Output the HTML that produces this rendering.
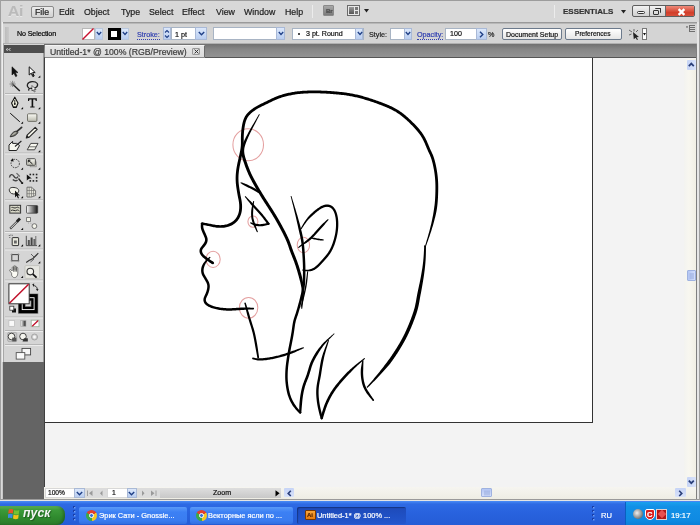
<!DOCTYPE html>
<html><head><meta charset="utf-8">
<style>
*{margin:0;padding:0;box-sizing:border-box}
html,body{width:700px;height:525px;overflow:hidden;background:#d6d6d6;font-family:"Liberation Sans",sans-serif}
.a{position:absolute}
.t{position:absolute;white-space:nowrap;line-height:1;-webkit-text-stroke:0.2px currentColor;will-change:transform}
#menubar{left:0;top:0;width:700px;height:22px;background:#d8d8d8;border-top:1px solid #a8a8a8}
#ctrl{left:3px;top:23px;width:694px;height:21px;background:#d4d4d4;border-top:1px solid #b8b8b8}
#tabbar{left:44px;top:44px;width:653px;height:13.8px;background:linear-gradient(#707070,#868686 40%,#929292);border-bottom:1px solid #555}
#toolhead{left:3px;top:44.5px;width:41px;height:8.3px;background:#4e4e4e}
#tools{left:3px;top:53px;width:41px;height:309px;background:#d5d5d5;border-left:1px solid #e8e8e8;border-right:1px solid #9a9a9a}
#darkleft{left:2.6px;top:362px;width:41.4px;height:137px;background:#646464}
#paste{left:44px;top:58px;width:653px;height:441px;background:#f3f3f3;border-left:1px solid #404040}
#artboard{left:45px;top:58px;width:548px;height:365px;background:#fff;border-right:1px solid #333;border-bottom:1px solid #333}
#taskbar{left:0;top:501px;width:700px;height:24px;background:linear-gradient(#4a8cf6 0,#2e6ae4 3px,#2862de 50%,#255cd6 100%)}
.menu{font-size:8.8px;color:#1c1c1c;top:8.2px}
.cb{font-size:8px;color:#222}
.field{position:absolute;background:#fff;border:1px solid #a8b4c4}
.dd{position:absolute;background:linear-gradient(#dce8fb,#b9cdf0);border-left:1px solid #c0cce0}
.btn{position:absolute;background:linear-gradient(#ffffff,#e6e6e6);border:1px solid #6c7a8c;border-radius:2px}
</style></head><body>
<div class="a" id="menubar"></div>
<div class="a" id="ctrl"></div>
<div class="a" id="tabbar"></div>
<div class="a" id="toolhead"></div>
<div class="a" id="tools"></div>
<div class="a" id="darkleft"></div>
<div class="a" id="paste"></div>
<div class="a" id="artboard"></div>
<div class="a" id="taskbar"></div>

<svg class="a" style="left:0;top:0" width="50" height="370" viewBox="0 0 50 370">
<defs>
<linearGradient id="gw" x1="0" y1="0" x2="0" y2="1"><stop offset="0" stop-color="#fbfbf5"/><stop offset="1" stop-color="#b9b9ad"/></linearGradient>
<linearGradient id="gh" x1="0" y1="0" x2="1" y2="0"><stop offset="0" stop-color="#fff"/><stop offset="1" stop-color="#111"/></linearGradient>
</defs>
<!-- header arrows -->
<path d="M8,48.5L6,49.5L8,50.5M10.5,48.5L8.5,49.5L10.5,50.5" stroke="#d0d0d0" stroke-width="0.9" fill="none"/>
<!-- separators -->
<g stroke="#b6b6b6" stroke-width="1">
<path d="M5,93.5H43M5,153H43M5,199.8H43M5,231.5H43M5,249H43M5,280H43M5,317H43M5,330.5H43M5,344.5H43"/>
</g>
<g stroke="#ececec" stroke-width="1">
<path d="M5,94.5H43M5,154H43M5,200.8H43M5,232.5H43M5,250H43M5,281H43M5,318H43M5,331.5H43M5,345.5H43"/>
</g>
<!-- markers -->
<g fill="#111">
<path d="M38,77.8L40.3,75.5V77.8Z"/>
<path d="M20.8,109.2L23.1,106.9V109.2Z M38,109.2L40.3,106.9V109.2Z"/>
<path d="M20.8,123.8L23.1,121.5V123.8Z M38,123.8L40.3,121.5V123.8Z"/>
<path d="M38,138.2L40.3,135.9V138.2Z M38,152.3L40.3,150V152.3Z"/>
<path d="M20.8,169.8L23.1,167.5V169.8Z M38,169.8L40.3,167.5V169.8Z"/>
<path d="M20.8,184L23.1,181.7V184Z"/>
<path d="M20.8,198.3L23.1,196V198.3Z M38,198.3L40.3,196V198.3Z"/>
<path d="M20.8,230L23.1,227.7V230Z"/>
<path d="M20.8,246.5L23.1,244.2V246.5Z M38,246.5L40.3,244.2V246.5Z"/>
<path d="M38,263.5L40.3,261.2V263.5Z M20.8,278L23.1,275.7V278Z"/>
</g>
<!-- selection -->
<path d="M12,66.8V75L14,73.2L15.6,76.6L17,76L15.4,72.6H18Z" fill="#111" stroke="#111" stroke-width="0.6" stroke-linejoin="round"/>
<path d="M29.2,66.8V75L31.2,73.2L32.8,76.6L34.2,76L32.6,72.6H35.2Z" fill="#fff" stroke="#111" stroke-width="1" stroke-linejoin="round"/>
<path d="M31,72.2L33,76.4L34.2,76Z" fill="#111"/>
<!-- magic wand -->
<path d="M13,84.5L19.8,91" stroke="#222" stroke-width="1.5"/>
<path d="M12.6,80.8V87M9.5,84H15.7M10.4,81.8L14.8,86.2M14.8,81.8L10.4,86.2" stroke="#666" stroke-width="0.7"/>
<!-- lasso -->
<path d="M29,88C26,86 27,82 32,81.6C37,81.3 39,84.5 36.5,87C35,88.3 33,88.6 31,88.3C29.5,88 28,89 29,90.6" stroke="#222" stroke-width="1.2" fill="none"/>
<path d="M32,85.5V91L33.2,89.8L34.3,92L35.2,91.5L34.2,89.5H36Z" fill="#fff" stroke="#222" stroke-width="0.6"/>
<!-- pen -->
<path d="M14.8,97.2L18,103L16.4,107H13.2L11.6,103Z" fill="#f2f2e0" stroke="#111" stroke-width="1.1" stroke-linejoin="round"/>
<path d="M14.8,100V104" stroke="#111" stroke-width="0.9"/><circle cx="14.8" cy="104" r="0.9" fill="#111"/>
<path d="M13,106.8H16.6V108H13Z" fill="#111"/>
<!-- type -->
<path d="M28,98.3H36.8V101H35.8L35.3,99.6H33.2V106.5H34.6V107.6H30.2V106.5H31.6V99.6H29.5L29,101H28Z" fill="#111"/>
<!-- line -->
<path d="M10.2,113.2L19.8,121.8" stroke="#111" stroke-width="1"/>
<!-- rectangle -->
<rect x="27.5" y="113.8" width="9.4" height="7.6" rx="1" fill="url(#gw)" stroke="#5a5a52" stroke-width="0.8"/>
<!-- paintbrush -->
<path d="M21.6,127.4L16.2,132.2" stroke="#333" stroke-width="1.8" stroke-linecap="round"/>
<path d="M16.6,131.2C14.2,131 11.6,133 10.2,136.8C13.8,136.6 16.6,135 17.8,132.6Z" fill="#7a7a72" stroke="#222" stroke-width="0.9"/>
<path d="M12.2,135.2C13.4,133.8 14.6,133 15.8,132.8" stroke="#e8e8e0" stroke-width="0.7" fill="none"/>
<!-- pencil -->
<path d="M35.2,127.3L37.2,129.3L29.2,137.2L26.3,138L27.1,135.1Z" fill="#f4f4ea" stroke="#222" stroke-width="1.1" stroke-linejoin="round"/><path d="M26.3,138L27.1,135.1L29.2,137.2Z" fill="#222"/>
<!-- blob brush -->
<path d="M9,145L12.6,141.3V143.4H16.6L19.5,145.5L16.6,150.5H9Z" fill="#f8f8f0" stroke="#222" stroke-width="1" stroke-linejoin="round"/>
<path d="M21.4,141L15,146.5" stroke="#222" stroke-width="1.1"/>
<!-- eraser -->
<path d="M30.8,143.4H38L34.6,149.8H27.2Z" fill="#f6f6ee" stroke="#333" stroke-width="0.9" stroke-linejoin="round"/>
<path d="M28.8,146.8H36" stroke="#333" stroke-width="0.7"/>
<!-- rotate -->
<circle cx="15.2" cy="163.5" r="4.2" fill="none" stroke="#333" stroke-width="1" stroke-dasharray="1.4,1.1"/>
<path d="M10.5,160.5L13,158.3L13.5,161.8Z" fill="#111"/>
<!-- scale -->
<rect x="30.2" y="161.8" width="6" height="5" fill="#cfcfc8" stroke="#888" stroke-width="0.7"/>
<rect x="26.6" y="158.7" width="8.8" height="6.6" rx="0.8" fill="url(#gw)" stroke="#444" stroke-width="0.9"/>
<path d="M28.3,160.2L32.5,164M28.3,160.2V162.3M28.3,160.2H30.4" stroke="#111" stroke-width="1"/>
<!-- warp -->
<path d="M9.5,177.5C10,174 12.5,173.8 13.8,176.2C15,178.5 17,178.8 18,176.5M12.8,179.5C14.5,181.2 16.5,181.2 17.5,179.8" stroke="#444" stroke-width="1.4" fill="none"/>
<path d="M18.5,178.5L22.5,183.5" stroke="#222" stroke-width="1.3"/>
<path d="M16.5,173.2L19.8,176.5" stroke="#666" stroke-width="1.2"/>
<!-- free transform -->
<g fill="#222"><rect x="29.5" y="173.7" width="1.6" height="1.6"/><rect x="32.6" y="173.7" width="1.6" height="1.6"/><rect x="35.8" y="173.7" width="1.6" height="1.6"/><rect x="35.8" y="176.9" width="1.6" height="1.6"/><rect x="29.5" y="180.1" width="1.6" height="1.6"/><rect x="32.6" y="180.1" width="1.6" height="1.6"/><rect x="35.8" y="180.1" width="1.6" height="1.6"/></g>
<path d="M26.8,174.4V180.6L28.3,179.2L30,178.6L31.8,178.4Z" fill="#111"/>
<!-- shape builder -->
<path d="M9.5,191C8.5,188.5 11,187 14,187.5C17.5,187.8 19.5,189.5 18.5,192C17.5,194 14,194.5 11.5,193.5C10.5,193 9.8,192 9.5,191Z" fill="#f3f3ea" stroke="#333" stroke-width="1"/>
<path d="M15,190.5V197.5L16.6,195.8L18,198.5L19,198L17.8,195.4H20Z" fill="#111"/>
<!-- perspective grid -->
<path d="M27,187.2H31.5L35.6,190.8V195.5L31.5,197H27Z" fill="#e6e6dc" stroke="#555" stroke-width="0.8"/>
<path d="M29.2,187.2V197M31.5,187.2V197M33.5,189V196M27,190.5H35.4M27,193.7H35.4" stroke="#666" stroke-width="0.6"/>
<!-- mesh -->
<rect x="9.8" y="205.3" width="10.8" height="7.8" fill="#d8d8c8" stroke="#333" stroke-width="1"/>
<path d="M11.5,207.5C13,206.8 14.5,209 16.5,207.5C18,206.5 19,208.5 19.5,208M11,210.5C13,209 15,212 17,210C18,209.5 19,211 19.5,211" stroke="#333" stroke-width="1" fill="none"/>
<!-- gradient -->
<rect x="26.5" y="205.6" width="11.2" height="7.6" rx="0.8" fill="url(#gh)" stroke="#444" stroke-width="0.8"/>
<!-- eyedropper -->
<path d="M10.2,228.6L17.6,221.2" stroke="#444" stroke-width="2.2"/>
<path d="M10.8,228L16.6,222.2" stroke="#eee" stroke-width="0.9"/>
<path d="M16,220.5L19,217.6L21,219.6L18,222.5Z" fill="#222"/>
<!-- blend -->
<rect x="26.6" y="217.6" width="3.8" height="3.8" fill="#f4f4ea" stroke="#666" stroke-width="0.8"/>
<path d="M28.5,222V224M30,223L32.5,224.5" stroke="#bbb" stroke-width="0.9"/>
<circle cx="34.4" cy="226.1" r="2.4" fill="#f4f4ea" stroke="#666" stroke-width="0.9"/>
<!-- symbol sprayer -->
<rect x="12.2" y="237.6" width="6.4" height="8" rx="0.5" fill="#e8e8dc" stroke="#333" stroke-width="1"/>
<path d="M14,240.5H16.8V243.5H14Z" fill="#666"/>
<path d="M9.3,235V236M10.8,234.6V235.6M12.3,234.8V235.8M9.8,237V238" stroke="#444" stroke-width="0.8"/>
<!-- column graph -->
<path d="M26.3,235.8V245.6H37" stroke="#444" stroke-width="0.9" fill="none"/>
<rect x="27.8" y="240" width="2" height="5.2" fill="#555"/>
<rect x="30.6" y="237.5" width="2" height="7.7" fill="#444"/>
<rect x="33.4" y="239" width="2" height="6.2" fill="#666"/>
<path d="M35.8,236V245.2" stroke="#555" stroke-width="0.8"/>
<!-- artboard -->
<rect x="11.8" y="254.6" width="6.6" height="6.2" fill="none" stroke="#444" stroke-width="1"/>
<path d="M11.8,253.2V254.6M18.4,253.2V254.6M11.8,260.8V262.2M18.4,260.8V262.2M10.4,254.6H11.8M10.4,260.8H11.8M18.4,254.6H19.8M18.4,260.8H19.8" stroke="#999" stroke-width="0.7"/>
<!-- slice -->
<path d="M26.2,262.5L29,260.5L33,258.5L36,255.5L38.3,253.2" stroke="#333" stroke-width="1.1" fill="none"/>
<path d="M30.5,262L34,259M31,254L34.5,257.5" stroke="#555" stroke-width="0.9"/>
<!-- hand -->
<path d="M11.6,273.2L9.8,270.8C9.2,270 10.2,269 11,269.8L12.2,271V267.6C12.2,266.7 13.6,266.7 13.6,267.6V270.6V266.4C13.6,265.5 15,265.5 15,266.4V270.6V266.8C15,265.9 16.4,265.9 16.4,266.8V270.8V268C16.4,267.2 17.8,267.2 17.8,268V273.2C17.8,275.8 16.4,277.6 14.4,277.6C13,277.6 12.3,276.6 11.6,275.2Z" fill="#fbfbf4" stroke="#444" stroke-width="0.65" stroke-linejoin="round"/>
<path d="M13.6,270.6V272M15,270.6V272M16.4,270.8V272" stroke="#555" stroke-width="0.6"/>
<!-- zoom selected -->
<rect x="25" y="265.6" width="14.6" height="12.8" rx="1" fill="#e6e6e0" stroke="#bdbdb6" stroke-width="0.8"/>
<circle cx="30.3" cy="271.6" r="3.3" fill="#f4f4ee" stroke="#333" stroke-width="1.1"/>
<path d="M32.8,274.1L36.6,277.6" stroke="#111" stroke-width="1.8"/>
<!-- fill/stroke -->
<rect x="18" y="293.5" width="20.3" height="20.3" fill="#888"/>
<rect x="18.6" y="294.1" width="19.1" height="19.1" fill="#000"/>
<rect x="22.2" y="297.7" width="11.9" height="11.9" fill="none" stroke="#fff" stroke-width="0.9"/>
<rect x="24.3" y="299.8" width="7.7" height="7.7" fill="#666" stroke="#000" stroke-width="1.2"/>
<rect x="25.6" y="301.1" width="5.1" height="5.1" fill="#d8d8d8"/>
<rect x="8.9" y="283.8" width="20.3" height="20" fill="#fff" stroke="#333" stroke-width="1"/>
<path d="M9.4,303.3L28.6,284.3" stroke="#c0102a" stroke-width="1.5"/>
<!-- swap -->
<path d="M33,285.5C35.5,285.5 37.3,287 37.3,289.5" stroke="#333" stroke-width="1" fill="none"/>
<path d="M32.2,284.3L34.2,283.6L33.8,287Z M36,289L38.6,289L37.3,291.2Z" fill="#222"/>
<!-- default -->
<rect x="12" y="308.5" width="4" height="4" fill="#111"/>
<rect x="9.8" y="306.2" width="4" height="4" fill="#fff" stroke="#333" stroke-width="0.8"/>
<!-- color modes -->
<rect x="8.9" y="320.5" width="5.6" height="5.8" fill="#fafafa" stroke="#bbb" stroke-width="0.7"/>
<rect x="20.7" y="320.5" width="5.2" height="5.8" fill="url(#gh)" stroke="#aaa" stroke-width="0.7"/>
<rect x="31.2" y="320.2" width="7.8" height="6.5" fill="#fff" stroke="#9ab09a" stroke-width="0.8"/>
<path d="M32.2,326.2L38.2,320.6" stroke="#c0102a" stroke-width="1.3"/>
<!-- draw modes -->
<rect x="7.6" y="332.4" width="9.2" height="9.2" rx="1.5" fill="#c8c8c8" stroke="#999" stroke-width="0.6"/>
<circle cx="11.5" cy="336.5" r="3.3" fill="#f4f4ee" stroke="#333" stroke-width="0.9"/>
<rect x="12.2" y="337.6" width="4.2" height="3.8" fill="#555"/>
<circle cx="23" cy="336.5" r="3.3" fill="#f4f4ee" stroke="#333" stroke-width="0.9"/>
<path d="M24,338.2H27.8V341.6H22.5Z" fill="#333"/>
<circle cx="34.5" cy="337" r="3" fill="#d0d0d0" stroke="#999" stroke-width="0.8"/>
<circle cx="34.5" cy="337" r="1.4" fill="#f8f8f8"/>
<!-- screen mode -->
<rect x="22" y="348.4" width="8.6" height="6.5" fill="#f6f6f6" stroke="#444" stroke-width="0.9"/>
<rect x="16.2" y="352.6" width="8.6" height="6.5" fill="#fafafa" stroke="#555" stroke-width="0.9"/>
</svg>


<!-- window frame -->
<div class="a" style="left:0;top:22px;width:1px;height:479px;background:#a0a0a0"></div>
<div class="a" style="left:1px;top:22px;width:1px;height:479px;background:#dadada"></div>
<div class="a" style="left:2px;top:22px;width:1px;height:479px;background:#eeeeee"></div>
<div class="a" style="left:3px;top:44px;width:1px;height:318px;background:#a8a8a8"></div><div class="a" style="left:2px;top:362px;width:1px;height:137px;background:#c8c8c8"></div>
<div class="a" style="left:696px;top:44px;width:1px;height:455px;background:#808080"></div>
<div class="a" style="left:697px;top:22px;width:2px;height:479px;background:#e6e6e6"></div>
<div class="a" style="left:699px;top:22px;width:1px;height:479px;background:#a8a8a8"></div>
<div class="a" style="left:0;top:498.5px;width:700px;height:2.5px;background:#e4e4e4;border-top:1px solid #9a9a9a"></div>
<!-- vertical scrollbar -->
<div class="a" style="left:684px;top:59px;width:12px;height:428px;background:linear-gradient(90deg,#f3f3f0,#f8f7f0 40%,#f1efe4)"></div>
<div class="a" style="left:687px;top:59.5px;width:8.5px;height:10.5px;background:linear-gradient(90deg,#c6d4f6,#d8e2fa);border-radius:1px"></div>
<svg class="a" style="left:687px;top:60px" width="9" height="10"><path d="M1.8,6.2L4.3,3.6L6.8,6.2" stroke="#2a3f7a" stroke-width="1.7" fill="none"/></svg>
<div class="a" style="left:686.8px;top:270px;width:9px;height:10.5px;background:linear-gradient(90deg,#b4c6f4,#d2ddfa);border:1px solid #9fb2e0;border-radius:1px"></div>
<svg class="a" style="left:688.5px;top:272.5px" width="6" height="6"><path d="M0.5,1H5M0.5,3H5M0.5,5H5" stroke="#8ea2d6" stroke-width="0.8"/></svg>
<div class="a" style="left:687px;top:476.5px;width:8.5px;height:10.5px;background:linear-gradient(90deg,#c6d4f6,#d8e2fa);border-radius:1px"></div>
<svg class="a" style="left:687px;top:477px" width="9" height="10"><path d="M1.8,3.6L4.3,6.2L6.8,3.6" stroke="#2a3f7a" stroke-width="1.7" fill="none"/></svg>
<!-- status bar -->
<div class="a" style="left:44px;top:486.5px;width:652px;height:12px;background:linear-gradient(#f6f5f0,#eeede4)"></div>
<div class="a" style="left:45px;top:487.5px;width:40px;height:10.5px;background:#fff;border:1px solid #d8d8d8"></div>
<div class="t" style="left:48.2px;top:489.6px;font-size:6.6px;color:#111">100%</div>
<div class="dd" style="left:74px;top:487.8px;width:11px;height:10px;border:1px solid #a9b9d6"></div>
<svg class="a" style="left:76px;top:490.5px" width="7" height="5"><path d="M0.8,1L3.5,3.8L6.2,1" stroke="#1f3f86" stroke-width="1.4" fill="none"/></svg>
<div class="a" style="left:85px;top:487.5px;width:75px;height:10.5px;background:#dcdcdc"></div>
<svg class="a" style="left:85px;top:487.5px" width="75" height="11"><path d="M2.5,2.5V8" stroke="#9a9a9a" stroke-width="0.9"/><path d="M7.5,2.5L4,5.2L7.5,8Z M17.5,2.5L15,5.2L17.5,8Z M57,2.5L59.5,5.2L57,8Z M66,2.5L69.5,5.2L66,8Z" fill="#9a9a9a"/><path d="M71,2.5V8" stroke="#9a9a9a" stroke-width="0.9"/></svg>
<div class="a" style="left:107px;top:487.5px;width:30px;height:10.5px;background:#fff;border:1px solid #d8d8d8"></div>
<div class="t" style="left:111.5px;top:490px;font-size:6.8px;color:#111">1</div>
<div class="dd" style="left:126.5px;top:487.8px;width:10.5px;height:10px;border:1px solid #a9b9d6"></div>
<svg class="a" style="left:128.3px;top:490.5px" width="7" height="5"><path d="M0.8,1L3.5,3.8L6.2,1" stroke="#1f3f86" stroke-width="1.4" fill="none"/></svg>
<div class="a" style="left:159.6px;top:488.2px;width:121px;height:10px;background:linear-gradient(#dedede,#c8c8c8)"></div>
<div class="t" style="left:213.2px;top:490.2px;font-size:7.1px;color:#111">Zoom</div>
<svg class="a" style="left:275px;top:490px" width="5" height="7"><path d="M0.5,0.3L4.6,3.3L0.5,6.4Z" fill="#000"/></svg>
<div class="a" style="left:284px;top:488.2px;width:9.6px;height:9.2px;background:linear-gradient(#c6d4f6,#d8e2fa);border-radius:1px"></div>
<svg class="a" style="left:284.5px;top:488.5px" width="9" height="9"><path d="M5.8,1.8L3.2,4.4L5.8,7" stroke="#2a3f7a" stroke-width="1.6" fill="none"/></svg>
<div class="a" style="left:480.7px;top:488.4px;width:11px;height:8.8px;background:linear-gradient(#b4c6f4,#d2ddfa);border:1px solid #9fb2e0;border-radius:1px"></div>
<svg class="a" style="left:483.5px;top:490px" width="6" height="6"><path d="M1,0.5V5.5M3,0.5V5.5M5,0.5V5.5" stroke="#8ea2d6" stroke-width="0.8"/></svg>
<div class="a" style="left:675px;top:488.2px;width:10.5px;height:9.2px;background:linear-gradient(#c6d4f6,#d8e2fa);border-radius:1px"></div>
<svg class="a" style="left:676px;top:488.5px" width="9" height="9"><path d="M3.2,1.8L5.8,4.4L3.2,7" stroke="#2a3f7a" stroke-width="1.6" fill="none"/></svg>
<!-- taskbar -->
<div class="a" style="left:0;top:505.5px;width:65px;height:19.5px;border-radius:0 8px 8px 0;background:linear-gradient(#5fb85a 0%,#3c9a3a 20%,#2f8a2e 60%,#2b7c2a 100%);box-shadow:inset -2px 0 3px rgba(0,0,0,0.25)"></div>
<svg class="a" style="left:8px;top:508px" width="12" height="12"><path d="M0.8,1.6C2.5,0.6 4,0.8 5.4,1.6L4.8,5.6C3.4,4.8 2,4.8 0.2,5.6Z" fill="#e8542a"/><path d="M6.2,1.9C7.8,2.8 9.4,2.8 11.3,1.9L10.8,5.9C9,6.7 7.4,6.6 5.6,5.9Z" fill="#74c234"/><path d="M0.1,6.3C2,5.5 3.4,5.5 4.7,6.3L4.2,10.3C2.8,9.5 1.4,9.5-0.4,10.3Z" fill="#3c8ae4"/><path d="M5.5,6.6C7.3,7.4 8.9,7.4 10.7,6.6L10.2,10.6C8.4,11.4 6.8,11.3 5,10.6Z" fill="#f2c21a"/></svg>
<div class="t" style="left:23px;top:507px;font-size:12.2px;font-weight:bold;font-style:italic;color:#f4f4f4;letter-spacing:0.1px;text-shadow:1px 1px 1px rgba(0,0,0,0.35);-webkit-text-stroke:0">пуск</div>
<svg class="a" style="left:72px;top:505px" width="6" height="17"><g fill="#1a3fa8"><rect x="1" y="1" width="2" height="2"/><rect x="1" y="5" width="2" height="2"/><rect x="1" y="9" width="2" height="2"/><rect x="1" y="13" width="2" height="2"/></g><g fill="#6e9ef6"><rect x="2" y="2" width="1.5" height="1.5"/><rect x="2" y="6" width="1.5" height="1.5"/><rect x="2" y="10" width="1.5" height="1.5"/><rect x="2" y="14" width="1.5" height="1.5"/></g></svg>
<div class="a" style="left:79px;top:507px;width:108px;height:17px;border-radius:2px;background:linear-gradient(#5a9af8,#3c80f4 30%,#3a7cf0 80%,#3370e0)"></div>
<div class="a" style="left:85.5px;top:509.5px;width:11px;height:11px;border-radius:50%;background:conic-gradient(from -60deg,#e0402e 0 120deg,#f5c823 120deg 240deg,#3aa84a 240deg 360deg)"></div>
<div class="a" style="left:88.5px;top:512.5px;width:5px;height:5px;border-radius:50%;background:#3a72d8;border:1px solid #fff"></div>
<div class="t" style="left:99px;top:512px;font-size:7.4px;color:#fff">Эрик Сати - Gnossie...</div>
<div class="a" style="left:190px;top:507px;width:103px;height:17px;border-radius:2px;background:linear-gradient(#5a9af8,#3c80f4 30%,#3a7cf0 80%,#3370e0)"></div>
<div class="a" style="left:195.5px;top:509.5px;width:11px;height:11px;border-radius:50%;background:conic-gradient(from -60deg,#e0402e 0 120deg,#f5c823 120deg 240deg,#3aa84a 240deg 360deg)"></div>
<div class="a" style="left:198.5px;top:512.5px;width:5px;height:5px;border-radius:50%;background:#3a72d8;border:1px solid #fff"></div>
<div class="t" style="left:208px;top:512px;font-size:7.4px;color:#fff">Векторные ясли по ...</div>
<div class="a" style="left:297px;top:507px;width:109px;height:17px;border-radius:2px;background:linear-gradient(#1e4ab8,#1f50c4 50%,#2456cc);box-shadow:inset 1px 1px 1px rgba(0,0,0,0.3)"></div>
<div class="a" style="left:305px;top:509.5px;width:10.5px;height:10.5px;background:linear-gradient(#f7a53a,#e77a0e);border:1px solid #7a3a00;border-radius:1px"></div>
<div class="t" style="left:306.5px;top:512px;font-size:6px;color:#5a2800;font-weight:bold">Ai</div>
<div class="t" style="left:317px;top:512px;font-size:7.4px;color:#fff">Untitled-1* @ 100% ...</div>
<svg class="a" style="left:591px;top:505px" width="6" height="17"><g fill="#1a3fa8"><rect x="1" y="1" width="2" height="2"/><rect x="1" y="5" width="2" height="2"/><rect x="1" y="9" width="2" height="2"/><rect x="1" y="13" width="2" height="2"/></g><g fill="#6e9ef6"><rect x="2" y="2" width="1.5" height="1.5"/><rect x="2" y="6" width="1.5" height="1.5"/><rect x="2" y="10" width="1.5" height="1.5"/><rect x="2" y="14" width="1.5" height="1.5"/></g></svg>
<div class="t" style="left:600.6px;top:511.5px;font-size:7.6px;color:#fff">RU</div>
<div class="a" style="left:624.5px;top:502px;width:75.5px;height:23px;background:linear-gradient(#1aa0ee,#1290e6 20%,#0f8ae2 80%,#0c7fd8);border-left:1px solid #0a5fc0"></div>
<div class="a" style="left:633px;top:509px;width:10px;height:10px;border-radius:50%;background:radial-gradient(circle at 40% 40%,#f0f0f0,#888 60%,#444)"></div>
<div class="a" style="left:644.5px;top:509px;width:10px;height:11px;background:#d81e1e;border-radius:2px 2px 5px 5px;border:1px solid #fff"></div>
<div class="t" style="left:646.5px;top:510.5px;font-size:7.5px;font-weight:bold;color:#fff">C</div>
<div class="a" style="left:656px;top:508.5px;width:11px;height:11px;background:#b01818;border:1px solid #e0d0d0"></div>
<div class="a" style="left:658.5px;top:511px;width:6px;height:6px;background:#e85050;transform:rotate(45deg)"></div>
<div class="t" style="left:671px;top:511.6px;font-size:7.8px;color:#fff">19:17</div>

<!-- menubar content -->
<div class="a" style="left:0;top:0;width:700px;height:1px;background:#9c9c9c"></div>
<div class="a" style="left:0;top:0;width:1px;height:500px;background:#a0a0a0"></div>
<div class="a" style="left:699px;top:0;width:1px;height:500px;background:#a0a0a0"></div>
<div class="t" style="left:8.3px;top:2.6px;font-size:15.5px;font-weight:bold;color:#bababa;letter-spacing:-0.3px;text-shadow:0 1px 0 #e8e8e8">Ai</div>
<div class="a" style="left:31px;top:6px;width:23px;height:12px;border:1px solid #8a8a8a;border-radius:2px;background:linear-gradient(#ececec,#d2d2d2)"></div>
<div class="t menu" style="left:34.5px">File</div>
<div class="t menu" style="left:58.5px">Edit</div>
<div class="t menu" style="left:84px">Object</div>
<div class="t menu" style="left:120.5px">Type</div>
<div class="t menu" style="left:149px">Select</div>
<div class="t menu" style="left:182.3px">Effect</div>
<div class="t menu" style="left:215.5px">View</div>
<div class="t menu" style="left:244.2px">Window</div>
<div class="t menu" style="left:285px">Help</div>
<div class="a" style="left:312px;top:5px;width:1px;height:13px;background:#b0b0b0;border-right:1px solid #ececec"></div>
<div class="a" style="left:323px;top:5px;width:11px;height:10.5px;background:linear-gradient(#a8a8a8,#7a7a7a);border:1px solid #8a8a8a;border-radius:1px"></div>
<div class="t" style="left:325.8px;top:7.6px;font-size:6px;color:#4a4a4a;font-weight:bold">Br</div>
<div class="a" style="left:347px;top:5px;width:13px;height:11px;background:#e8e8e8;border:1px solid #6a6a6a"></div>
<div class="a" style="left:349px;top:7px;width:5px;height:7px;background:linear-gradient(#9a9a9a,#555)"></div>
<div class="a" style="left:355px;top:7px;width:3px;height:3px;background:#777"></div>
<div class="a" style="left:355px;top:11px;width:3px;height:3px;background:#777"></div>
<svg class="a" style="left:364px;top:9px" width="5" height="4"><path d="M0,0H5L2.5,3.5Z" fill="#222"/></svg>
<div class="a" style="left:554px;top:5px;width:1px;height:13px;background:#b0b0b0;border-right:1px solid #ececec"></div>
<div class="t" style="left:562.8px;top:7.6px;font-size:8px;font-weight:bold;color:#333">ESSENTIALS</div>
<svg class="a" style="left:620.5px;top:10px" width="5" height="4"><path d="M0,0H5L2.5,3.5Z" fill="#222"/></svg>
<div class="a" style="left:632px;top:5.4px;width:62.5px;height:12px;border:1px solid #5e5e5e;border-radius:2px;overflow:hidden;background:linear-gradient(#f2f2f2,#d0d0d0)">
  <div class="a" style="left:15.6px;top:0;width:1px;height:12px;background:#6a6a6a"></div>
  <div class="a" style="left:32.2px;top:0;width:1px;height:12px;background:#6a6a6a"></div>
  <div class="a" style="left:33.2px;top:0;width:30px;height:12px;background:linear-gradient(#ee8a7a,#d23e2a 55%,#dc5a44)"></div>
  <div class="a" style="left:3.6px;top:4.4px;width:8.4px;height:3.4px;border:1px solid #333;background:#fafafa;border-radius:1.5px"></div>
  <div class="a" style="left:19.8px;top:4px;width:6px;height:5px;border:1px solid #333;border-radius:1px"></div>
  <div class="a" style="left:22px;top:2px;width:6px;height:5px;border:1px solid #333;border-left:none;border-bottom:none;border-radius:1px"></div>
  <svg class="a" style="left:43.6px;top:1.8px" width="9" height="8"><path d="M1.6,1.2L7.4,6.8M7.4,1.2L1.6,6.8" stroke="#fff" stroke-width="2.3"/></svg>
</div>
<!-- control bar content -->
<div class="a" style="left:3px;top:22px;width:694px;height:1px;background:#9a9a9a"></div>
<div class="a" style="left:3px;top:43px;width:694px;height:1px;background:#b0b0b0"></div>
<div class="a" style="left:5px;top:27px;width:4px;height:16px;background:linear-gradient(90deg,#bdbdbd,#c9c9c9)"></div>
<div class="t cb" style="left:16.6px;top:30.9px;font-size:7.1px;letter-spacing:-0.1px;color:#000">No Selection</div>
<div class="a" style="left:81.5px;top:27.5px;width:13px;height:12.5px;background:#fff;border:1px solid #b8b8b8"></div>
<svg class="a" style="left:82px;top:28px" width="12" height="12"><path d="M0.5,11.5L11.5,0.5" stroke="#c8102e" stroke-width="1.4"/></svg>
<div class="dd" style="left:95px;top:27.5px;width:8px;height:12.5px;border:1px solid #b9c7dc"></div>
<svg class="a" style="left:96px;top:31px" width="6" height="5"><path d="M0.8,1L3,3.5L5.2,1" stroke="#1f3f86" stroke-width="1.3" fill="none"/></svg>
<div class="a" style="left:108px;top:27.5px;width:12.5px;height:12.5px;background:#000"></div>
<div class="a" style="left:111.2px;top:30.7px;width:6px;height:6px;background:#fff"></div>
<div class="dd" style="left:121px;top:27.5px;width:8px;height:12.5px;border:1px solid #b9c7dc"></div>
<svg class="a" style="left:122px;top:31px" width="6" height="5"><path d="M0.8,1L3,3.5L5.2,1" stroke="#1f3f86" stroke-width="1.3" fill="none"/></svg>
<div class="t cb" style="left:136.6px;top:31px;font-size:7.2px;color:#3240b0;border-bottom:1px dotted #3240b0;padding-bottom:0.5px">Stroke:</div>
<div class="a" style="left:162.8px;top:27.3px;width:8.5px;height:12.7px;background:linear-gradient(#dce8fb,#b9cdf0);border:1px solid #a9b9d6"></div>
<svg class="a" style="left:164px;top:28.5px" width="6" height="10"><path d="M1,3.5L3,1.5L5,3.5M1,6.5L3,8.5L5,6.5" stroke="#1f3f86" stroke-width="1.1" fill="none"/></svg>
<div class="field" style="left:171.3px;top:27.3px;width:35.2px;height:12.7px"></div>
<div class="t cb" style="left:175px;top:31px;font-size:7.2px;color:#111">1 pt</div>
<div class="dd" style="left:195px;top:27.3px;width:11.5px;height:12.7px;border:1px solid #a9b9d6"></div>
<svg class="a" style="left:197.5px;top:31px" width="7" height="5"><path d="M0.8,1L3.5,3.8L6.2,1" stroke="#1f3f86" stroke-width="1.4" fill="none"/></svg>
<div class="field" style="left:212.6px;top:27.3px;width:72.4px;height:12.7px"></div>
<div class="dd" style="left:276.4px;top:27.3px;width:8.6px;height:12.7px;border:1px solid #a9b9d6"></div>
<svg class="a" style="left:277.8px;top:31px" width="6" height="5"><path d="M0.8,1L3,3.5L5.2,1" stroke="#1f3f86" stroke-width="1.3" fill="none"/></svg>
<div class="field" style="left:291.5px;top:27.5px;width:72px;height:12.9px"></div>
<div class="a" style="left:297.5px;top:33px;width:2px;height:2px;background:#111;border-radius:1px"></div>
<div class="t cb" style="left:306.3px;top:31px;font-size:7.1px;color:#111">3 pt. Round</div>
<div class="dd" style="left:355.4px;top:27.5px;width:8.1px;height:12.9px;border:1px solid #a9b9d6"></div>
<svg class="a" style="left:356.5px;top:31.2px" width="6" height="5"><path d="M0.8,1L3,3.5L5.2,1" stroke="#1f3f86" stroke-width="1.3" fill="none"/></svg>
<div class="t cb" style="left:369.4px;top:31px;font-size:7.2px;color:#222">Style:</div>
<div class="field" style="left:389.6px;top:27.5px;width:22.8px;height:12.9px"></div>
<div class="dd" style="left:404px;top:27.5px;width:8.4px;height:12.9px;border:1px solid #a9b9d6"></div>
<svg class="a" style="left:405.2px;top:31.2px" width="6" height="5"><path d="M0.8,1L3,3.5L5.2,1" stroke="#1f3f86" stroke-width="1.3" fill="none"/></svg>
<div class="t cb" style="left:416.5px;top:31px;font-size:7.2px;color:#3240b0;border-bottom:1px dotted #3240b0;padding-bottom:0.5px">Opacity:</div>
<div class="field" style="left:445.4px;top:27.5px;width:41.1px;height:12.9px"></div>
<div class="t cb" style="left:450.4px;top:31px;font-size:7.1px;color:#111">100</div>
<div class="dd" style="left:476px;top:27.5px;width:10.5px;height:12.9px;border:1px solid #a9b9d6"></div>
<svg class="a" style="left:479px;top:30.5px" width="5" height="7"><path d="M1,0.8L3.8,3.5L1,6.2" stroke="#1f3f86" stroke-width="1.4" fill="none"/></svg>
<div class="t cb" style="left:488px;top:31px;font-size:7.2px;color:#222">%</div>
<div class="btn" style="left:502px;top:28px;width:60px;height:12.4px"></div>
<div class="t cb" style="left:505.6px;top:31.2px;font-size:7px;color:#111">Document Setup</div>
<div class="btn" style="left:565px;top:28px;width:57px;height:12.4px"></div>
<div class="t cb" style="left:575px;top:31.2px;font-size:6.6px;color:#111">Preferences</div>
<svg class="a" style="left:628px;top:28px" width="13" height="12"><path d="M1,2L4,4M6,1L6,3.5M10,2L8,4M1,7L3.5,6" stroke="#666" stroke-width="1"/><path d="M5,4L11,9L8.5,9.3L10,11.5L9,12L7.6,9.8L5.8,11.2Z" fill="#222"/></svg>
<div class="a" style="left:641.5px;top:28px;width:5px;height:12.4px;background:#fff;border:1px solid #777"></div>
<svg class="a" style="left:642.5px;top:32.5px" width="3" height="3"><path d="M0,0H3L1.5,2.5Z" fill="#111"/></svg>
<svg class="a" style="left:686px;top:24.5px" width="10" height="7"><path d="M0,1.5L2,1.5L1,3Z" fill="#333"/><path d="M4,0.5H9M4,2.5H9M4,4.5H9M4,6.5H9" stroke="#555" stroke-width="0.8"/><path d="M3.5,0V7" stroke="#555" stroke-width="0.8"/></svg>
<!-- tab -->
<div class="a" style="left:45px;top:45px;width:160px;height:12.8px;background:linear-gradient(#e6e6e6,#dadada);border-top:1px solid #f4f4f4;border-right:1px solid #6a6a6a"></div>
<div class="a" style="left:45px;top:57px;width:160px;height:1px;background:#8a8a8a"></div>
<div class="t" style="left:50.1px;top:48px;font-size:8.7px;color:#3a3a3a">Untitled-1* @ 100% (RGB/Preview)</div>
<div class="a" style="left:192.3px;top:48px;width:7.4px;height:7.4px;border:1px solid #999;background:#dcdcdc;border-radius:1px"></div>
<svg class="a" style="left:193.5px;top:49.2px" width="5" height="5"><path d="M0.6,0.6L4.4,4.4M4.4,0.6L0.6,4.4" stroke="#333" stroke-width="1"/></svg>

<svg id="draw" class="a" style="left:0;top:0" width="700" height="525" viewBox="0 0 700 525"><g stroke="#e4a0a0" stroke-width="1.05" fill="none">
<ellipse cx="248.2" cy="144.8" rx="15.3" ry="16"/>
<ellipse cx="252.9" cy="221.6" rx="5" ry="5.7"/>
<ellipse cx="213.1" cy="259.3" rx="7.1" ry="8.1"/>
<ellipse cx="248.6" cy="307.8" rx="9.2" ry="10.4"/>
<ellipse cx="303.4" cy="245" rx="6.2" ry="7.8"/>
</g><g fill="#000"><path d="M213.52,261.92 L212.67,261.35 L211.82,260.79 L210.98,260.22 L210.14,259.66 L209.32,259.09 L208.50,258.51 L207.69,257.92 L206.89,257.32 L206.11,256.71 L205.34,256.09 L204.62,255.46 L203.95,254.82 L203.37,254.15 L202.88,253.45 L202.49,252.72 L202.22,251.98 L202.08,251.24 L202.09,250.54 L202.25,249.87 L202.56,249.21 L203.02,248.52 L203.62,247.81 L204.28,247.04 L204.96,246.21 L205.61,245.33 L206.20,244.41 L206.73,243.42 L207.19,242.38 L207.51,241.25 L207.66,240.06 L207.61,238.86 L207.38,237.72 L207.04,236.65 L206.64,235.64 L206.23,234.69 L205.81,233.75 L205.40,232.81 L204.98,231.88 L204.56,230.96 L204.18,230.06 L203.84,229.19 L203.58,228.32 L203.40,227.46 L203.29,226.57 L203.25,225.64 L203.26,224.67 L203.30,223.67 L200.90,223.53 L200.82,224.56 L200.76,225.62 L200.76,226.72 L200.85,227.84 L201.06,228.95 L201.38,230.02 L201.77,231.04 L202.18,232.01 L202.61,232.95 L203.02,233.88 L203.44,234.80 L203.85,235.73 L204.24,236.64 L204.59,237.53 L204.87,238.37 L205.03,239.18 L205.07,239.95 L204.97,240.71 L204.74,241.49 L204.40,242.29 L203.96,243.08 L203.46,243.86 L202.91,244.62 L202.30,245.36 L201.63,246.13 L200.94,246.96 L200.30,247.92 L199.79,249.02 L199.51,250.23 L199.49,251.47 L199.71,252.66 L200.11,253.78 L200.66,254.81 L201.33,255.76 L202.07,256.61 L202.86,257.38 L203.67,258.08 L204.49,258.74 L205.31,259.38 L206.14,260.01 L206.98,260.62 L207.83,261.22 L208.68,261.81 L209.53,262.38 L210.38,262.95 L211.23,263.52 L212.08,264.08Z"/><circle cx="212.80" cy="263.00" r="1.30"/><circle cx="202.10" cy="223.60" r="1.20"/><path d="M201.90,224.78 L202.89,224.96 L203.87,225.13 L204.85,225.31 L205.82,225.50 L206.79,225.69 L207.76,225.90 L208.73,226.11 L209.70,226.33 L210.68,226.55 L211.66,226.77 L212.66,226.98 L213.66,227.18 L214.68,227.35 L215.70,227.51 L216.72,227.63 L217.75,227.73 L218.79,227.81 L219.82,227.85 L220.86,227.87 L221.91,227.85 L222.95,227.79 L224.00,227.70 L225.05,227.55 L226.09,227.35 L227.12,227.10 L228.14,226.81 L229.14,226.47 L230.12,226.08 L231.09,225.65 L232.04,225.18 L232.97,224.66 L233.87,224.08 L234.74,223.45 L235.57,222.77 L236.36,222.04 L237.11,221.26 L237.80,220.43 L238.43,219.57 L239.02,218.67 L239.55,217.74 L240.02,216.79 L240.45,215.81 L240.82,214.81 L241.15,213.79 L241.41,212.76 L241.63,211.73 L241.80,210.68 L241.92,209.64 L242.00,208.59 L242.05,207.55 L242.06,206.51 L242.04,205.46 L241.99,204.42 L241.91,203.38 L241.79,202.35 L241.64,201.33 L241.48,200.31 L241.29,199.31 L241.10,198.32 L240.90,197.33 L240.71,196.36 L240.52,195.38 L240.34,194.40 L240.16,193.43 L239.99,192.44 L239.83,191.46 L239.66,190.48 L239.50,189.50 L239.35,188.52 L239.20,187.54 L239.06,186.56 L238.93,185.58 L238.81,184.61 L238.71,183.63 L238.63,182.66 L238.56,181.69 L238.50,180.71 L238.47,179.74 L238.45,178.76 L238.46,177.79 L238.48,176.81 L238.51,175.84 L238.57,174.86 L238.64,173.89 L238.72,172.92 L238.83,171.95 L238.95,170.98 L239.08,170.00 L239.23,169.03 L239.39,168.06 L239.56,167.08 L239.74,166.11 L239.93,165.13 L240.12,164.16 L240.31,163.19 L240.52,162.22 L240.73,161.25 L240.94,160.27 L241.16,159.30 L241.38,158.32 L241.60,157.34 L241.82,156.36 L242.04,155.38 L242.25,154.40 L242.46,153.41 L242.66,152.42 L242.86,151.42 L243.04,150.42 L243.21,149.41 L243.36,148.39 L243.48,147.36 L243.58,146.33 L243.65,145.29 L243.69,144.26 L243.71,143.24 L243.72,142.22 L243.72,141.21 L243.71,140.21 L243.71,139.21 L243.71,138.23 L243.72,137.24 L243.75,136.26 L243.79,135.28 L243.84,134.30 L243.91,133.32 L243.98,132.33 L244.07,131.35 L244.17,130.37 L244.28,129.40 L244.41,128.42 L244.55,127.45 L244.70,126.49 L244.87,125.53 L245.05,124.57 L245.26,123.63 L245.49,122.70 L245.74,121.79 L246.03,120.90 L246.36,120.03 L246.73,119.19 L247.14,118.37 L247.59,117.57 L248.08,116.81 L248.62,116.06 L249.20,115.35 L249.82,114.66 L250.48,113.99 L251.17,113.35 L251.88,112.72 L252.62,112.12 L253.38,111.53 L254.16,110.96 L254.96,110.40 L255.76,109.86 L256.58,109.33 L257.41,108.83 L258.25,108.34 L259.10,107.86 L259.96,107.41 L260.83,106.96 L261.72,106.52 L262.61,106.09 L263.51,105.66 L264.41,105.23 L265.32,104.80 L266.22,104.37 L267.13,103.93 L268.04,103.49 L268.94,103.05 L269.84,102.61 L270.73,102.16 L271.63,101.73 L272.52,101.29 L273.42,100.87 L274.31,100.45 L275.21,100.04 L276.11,99.65 L277.01,99.28 L277.92,98.92 L278.83,98.57 L279.75,98.24 L280.68,97.92 L281.61,97.62 L282.55,97.33 L283.49,97.05 L284.44,96.78 L285.39,96.52 L286.34,96.28 L287.30,96.04 L288.26,95.81 L289.22,95.60 L290.19,95.39 L291.16,95.19 L292.12,95.00 L293.09,94.83 L294.06,94.66 L295.04,94.51 L296.01,94.37 L296.99,94.24 L297.96,94.12 L298.95,94.01 L299.93,93.91 L300.91,93.82 L301.90,93.74 L302.89,93.67 L303.88,93.60 L304.87,93.54 L305.86,93.48 L306.85,93.43 L307.84,93.39 L308.83,93.35 L309.82,93.32 L310.82,93.30 L311.81,93.29 L312.80,93.28 L313.79,93.27 L314.79,93.28 L315.78,93.29 L316.78,93.30 L317.77,93.32 L318.77,93.34 L319.76,93.36 L320.76,93.39 L321.75,93.43 L322.75,93.46 L323.74,93.50 L324.74,93.55 L325.73,93.60 L326.73,93.65 L327.72,93.71 L328.71,93.77 L329.71,93.84 L330.70,93.91 L331.69,93.98 L332.69,94.06 L333.68,94.14 L334.67,94.22 L335.67,94.31 L336.66,94.40 L337.66,94.49 L338.65,94.59 L339.64,94.68 L340.63,94.78 L341.62,94.89 L342.61,95.00 L343.59,95.11 L344.58,95.24 L345.56,95.36 L346.54,95.50 L347.52,95.65 L348.50,95.80 L349.47,95.96 L350.44,96.13 L351.41,96.32 L352.38,96.51 L353.35,96.71 L354.32,96.91 L355.29,97.13 L356.25,97.35 L357.22,97.58 L358.18,97.82 L359.14,98.06 L360.10,98.31 L361.06,98.56 L362.02,98.82 L362.98,99.09 L363.94,99.36 L364.89,99.64 L365.84,99.92 L366.79,100.21 L367.74,100.50 L368.69,100.80 L369.63,101.11 L370.58,101.42 L371.52,101.73 L372.46,102.05 L373.41,102.37 L374.35,102.70 L375.29,103.03 L376.23,103.36 L377.17,103.70 L378.10,104.04 L379.04,104.38 L379.97,104.73 L380.91,105.08 L381.83,105.43 L382.76,105.79 L383.68,106.15 L384.60,106.52 L385.52,106.90 L386.43,107.28 L387.34,107.67 L388.24,108.07 L389.14,108.48 L390.03,108.90 L390.92,109.33 L391.80,109.76 L392.68,110.21 L393.54,110.67 L394.40,111.14 L395.25,111.62 L396.08,112.12 L396.91,112.64 L397.73,113.17 L398.54,113.71 L399.34,114.27 L400.13,114.84 L400.91,115.43 L401.68,116.03 L402.45,116.65 L403.21,117.27 L403.97,117.90 L404.71,118.55 L405.46,119.20 L406.20,119.86 L406.93,120.52 L407.66,121.19 L408.38,121.87 L409.10,122.55 L409.81,123.24 L410.52,123.93 L411.22,124.63 L411.92,125.34 L412.62,126.04 L413.30,126.76 L413.98,127.47 L414.66,128.20 L415.32,128.92 L415.98,129.66 L416.62,130.40 L417.25,131.15 L417.87,131.91 L418.48,132.67 L419.07,133.44 L419.65,134.23 L420.20,135.02 L420.74,135.83 L421.27,136.65 L421.77,137.47 L422.26,138.31 L422.72,139.16 L423.18,140.02 L423.61,140.89 L424.03,141.78 L424.44,142.67 L424.83,143.57 L425.22,144.48 L425.60,145.39 L425.98,146.31 L426.36,147.24 L426.75,148.17 L427.14,149.11 L427.55,150.04 L427.96,150.97 L428.38,151.89 L428.81,152.80 L429.24,153.70 L429.65,154.59 L430.05,155.48 L430.42,156.38 L430.77,157.27 L431.09,158.18 L431.40,159.10 L431.69,160.03 L431.96,160.96 L432.21,161.91 L432.46,162.86 L432.69,163.82 L432.92,164.78 L433.13,165.74 L433.34,166.71 L433.53,167.68 L433.72,168.65 L433.89,169.62 L434.06,170.59 L434.22,171.57 L434.37,172.55 L434.51,173.52 L434.64,174.50 L434.76,175.48 L434.87,176.46 L434.97,177.44 L435.06,178.43 L435.14,179.41 L435.21,180.39 L435.27,181.38 L435.32,182.36 L435.36,183.35 L435.39,184.34 L435.42,185.33 L435.43,186.32 L435.44,187.31 L435.43,188.30 L435.43,189.29 L435.41,190.29 L435.40,191.28 L435.37,192.27 L435.34,193.27 L435.31,194.26 L435.27,195.26 L435.23,196.25 L435.18,197.24 L435.13,198.23 L435.07,199.22 L435.00,200.21 L434.93,201.20 L434.84,202.19 L434.75,203.17 L434.65,204.15 L434.54,205.14 L434.42,206.12 L434.29,207.09 L434.16,208.07 L434.01,209.05 L433.85,210.02 L433.70,211.00 L433.55,211.98 L433.39,212.96 L433.22,213.93 L433.05,214.91 L432.87,215.89 L432.68,216.87 L432.49,217.84 L432.29,218.82 L432.09,219.79 L431.89,220.77 L431.67,221.74 L431.46,222.71 L431.24,223.68 L431.01,224.65 L430.78,225.62 L430.54,226.59 L430.30,227.56 L430.05,228.53 L429.80,229.49 L429.55,230.46 L429.29,231.42 L429.03,232.38 L428.76,233.35 L428.49,234.31 L428.22,235.27 L427.94,236.23 L427.66,237.19 L427.38,238.15 L427.09,239.11 L426.81,240.07 L426.52,241.03 L426.23,241.99 L425.94,242.95 L425.66,243.91 L425.37,244.86 L425.22,245.34 L426.18,245.66 L426.34,245.18 L426.68,244.24 L427.01,243.30 L427.35,242.35 L427.68,241.41 L428.02,240.46 L428.35,239.52 L428.68,238.57 L429.02,237.62 L429.34,236.68 L429.67,235.73 L429.99,234.77 L430.31,233.82 L430.63,232.87 L430.94,231.91 L431.25,230.95 L431.55,230.00 L431.85,229.04 L432.15,228.08 L432.44,227.11 L432.73,226.15 L433.01,225.18 L433.29,224.21 L433.56,223.25 L433.83,222.27 L434.09,221.30 L434.35,220.33 L434.60,219.35 L434.85,218.37 L435.09,217.40 L435.33,216.41 L435.56,215.43 L435.79,214.45 L436.01,213.46 L436.22,212.47 L436.43,211.48 L436.61,210.48 L436.77,209.48 L436.93,208.48 L437.07,207.47 L437.20,206.47 L437.32,205.46 L437.44,204.45 L437.54,203.44 L437.63,202.43 L437.72,201.42 L437.79,200.41 L437.86,199.40 L437.92,198.40 L437.98,197.39 L438.03,196.38 L438.07,195.37 L438.11,194.36 L438.14,193.36 L438.17,192.35 L438.20,191.34 L438.21,190.33 L438.23,189.32 L438.23,188.31 L438.24,187.30 L438.23,186.29 L438.21,185.28 L438.19,184.26 L438.16,183.25 L438.12,182.24 L438.07,181.22 L438.01,180.21 L437.93,179.20 L437.85,178.18 L437.76,177.17 L437.65,176.16 L437.54,175.15 L437.42,174.15 L437.28,173.14 L437.14,172.14 L436.98,171.13 L436.82,170.13 L436.65,169.13 L436.47,168.13 L436.28,167.14 L436.08,166.14 L435.87,165.15 L435.65,164.16 L435.42,163.17 L435.17,162.18 L434.92,161.19 L434.65,160.21 L434.37,159.23 L434.07,158.24 L433.74,157.26 L433.39,156.29 L433.02,155.33 L432.62,154.37 L432.20,153.44 L431.77,152.52 L431.35,151.61 L430.92,150.71 L430.51,149.81 L430.11,148.91 L429.71,148.00 L429.33,147.09 L428.95,146.17 L428.57,145.25 L428.19,144.32 L427.80,143.39 L427.40,142.46 L426.99,141.52 L426.57,140.59 L426.13,139.67 L425.67,138.75 L425.19,137.84 L424.69,136.94 L424.18,136.04 L423.64,135.16 L423.09,134.30 L422.51,133.44 L421.92,132.60 L421.31,131.77 L420.69,130.95 L420.05,130.15 L419.41,129.36 L418.75,128.58 L418.08,127.81 L417.40,127.05 L416.71,126.30 L416.02,125.56 L415.33,124.82 L414.62,124.09 L413.92,123.37 L413.20,122.65 L412.48,121.94 L411.76,121.23 L411.03,120.53 L410.30,119.83 L409.56,119.14 L408.82,118.46 L408.07,117.77 L407.31,117.10 L406.55,116.43 L405.78,115.77 L405.00,115.11 L404.21,114.47 L403.42,113.83 L402.61,113.21 L401.79,112.59 L400.96,111.99 L400.12,111.40 L399.27,110.83 L398.41,110.27 L397.54,109.73 L396.66,109.20 L395.77,108.70 L394.87,108.20 L393.97,107.73 L393.06,107.26 L392.15,106.81 L391.23,106.37 L390.31,105.94 L389.39,105.52 L388.46,105.11 L387.53,104.70 L386.59,104.31 L385.66,103.93 L384.72,103.55 L383.78,103.18 L382.84,102.81 L381.89,102.46 L380.95,102.10 L380.01,101.75 L379.06,101.41 L378.12,101.06 L377.17,100.72 L376.22,100.39 L375.27,100.06 L374.32,99.73 L373.37,99.40 L372.41,99.08 L371.46,98.76 L370.50,98.44 L369.54,98.13 L368.58,97.83 L367.61,97.53 L366.65,97.24 L365.68,96.95 L364.71,96.67 L363.74,96.39 L362.76,96.12 L361.79,95.86 L360.81,95.60 L359.84,95.35 L358.86,95.10 L357.88,94.86 L356.89,94.62 L355.91,94.40 L354.92,94.18 L353.93,93.97 L352.94,93.76 L351.94,93.57 L350.94,93.38 L349.94,93.20 L348.94,93.04 L347.94,92.88 L346.94,92.73 L345.94,92.59 L344.93,92.46 L343.93,92.33 L342.93,92.22 L341.92,92.11 L340.92,92.00 L339.92,91.90 L338.92,91.80 L337.92,91.70 L336.92,91.61 L335.92,91.52 L334.91,91.43 L333.91,91.35 L332.91,91.27 L331.91,91.19 L330.90,91.11 L329.90,91.04 L328.89,90.98 L327.89,90.91 L326.88,90.86 L325.88,90.80 L324.87,90.75 L323.86,90.71 L322.86,90.66 L321.85,90.63 L320.84,90.59 L319.84,90.56 L318.83,90.54 L317.83,90.52 L316.82,90.50 L315.81,90.49 L314.80,90.48 L313.79,90.47 L312.78,90.48 L311.77,90.49 L310.76,90.50 L309.75,90.53 L308.74,90.56 L307.73,90.59 L306.72,90.64 L305.71,90.69 L304.70,90.74 L303.70,90.80 L302.69,90.87 L301.68,90.95 L300.67,91.03 L299.66,91.13 L298.65,91.23 L297.64,91.34 L296.63,91.46 L295.62,91.60 L294.62,91.74 L293.61,91.90 L292.61,92.07 L291.61,92.25 L290.61,92.44 L289.61,92.65 L288.62,92.86 L287.63,93.09 L286.64,93.32 L285.66,93.56 L284.67,93.82 L283.69,94.08 L282.71,94.36 L281.74,94.65 L280.76,94.95 L279.79,95.27 L278.82,95.60 L277.86,95.94 L276.90,96.31 L275.95,96.68 L275.01,97.08 L274.07,97.48 L273.14,97.90 L272.22,98.33 L271.31,98.77 L270.40,99.21 L269.50,99.65 L268.60,100.10 L267.70,100.54 L266.81,100.98 L265.91,101.41 L265.01,101.85 L264.11,102.27 L263.21,102.70 L262.30,103.13 L261.39,103.57 L260.48,104.01 L259.57,104.46 L258.66,104.92 L257.76,105.41 L256.86,105.91 L255.97,106.42 L255.10,106.96 L254.23,107.52 L253.37,108.09 L252.53,108.68 L251.70,109.29 L250.88,109.93 L250.08,110.59 L249.29,111.27 L248.52,111.99 L247.78,112.74 L247.07,113.53 L246.40,114.36 L245.77,115.22 L245.19,116.12 L244.66,117.05 L244.19,118.01 L243.77,118.98 L243.39,119.98 L243.07,120.98 L242.78,121.99 L242.53,123.00 L242.31,124.01 L242.11,125.02 L241.94,126.03 L241.78,127.04 L241.63,128.05 L241.50,129.06 L241.39,130.07 L241.28,131.09 L241.19,132.10 L241.11,133.11 L241.05,134.13 L240.99,135.15 L240.95,136.17 L240.92,137.19 L240.91,138.20 L240.91,139.22 L240.91,140.22 L240.92,141.22 L240.92,142.22 L240.92,143.20 L240.89,144.17 L240.85,145.14 L240.79,146.10 L240.70,147.06 L240.58,148.02 L240.44,148.97 L240.28,149.93 L240.11,150.90 L239.92,151.87 L239.72,152.84 L239.51,153.81 L239.30,154.78 L239.09,155.76 L238.87,156.73 L238.65,157.71 L238.43,158.68 L238.21,159.67 L237.99,160.65 L237.78,161.63 L237.57,162.62 L237.37,163.61 L237.18,164.60 L236.99,165.60 L236.81,166.59 L236.63,167.59 L236.47,168.59 L236.31,169.60 L236.17,170.61 L236.05,171.63 L235.94,172.64 L235.85,173.66 L235.77,174.69 L235.72,175.71 L235.68,176.73 L235.66,177.76 L235.65,178.79 L235.67,179.81 L235.71,180.84 L235.76,181.86 L235.83,182.88 L235.92,183.90 L236.03,184.92 L236.15,185.93 L236.28,186.94 L236.43,187.94 L236.58,188.95 L236.74,189.94 L236.90,190.94 L237.06,191.93 L237.23,192.92 L237.41,193.91 L237.59,194.91 L237.77,195.90 L237.96,196.89 L238.15,197.88 L238.35,198.86 L238.54,199.83 L238.72,200.79 L238.88,201.75 L239.01,202.70 L239.12,203.66 L239.20,204.61 L239.24,205.56 L239.26,206.51 L239.25,207.47 L239.21,208.42 L239.13,209.36 L239.02,210.30 L238.88,211.22 L238.69,212.13 L238.46,213.02 L238.18,213.90 L237.86,214.76 L237.49,215.60 L237.08,216.42 L236.62,217.21 L236.13,217.98 L235.59,218.71 L235.01,219.40 L234.40,220.05 L233.74,220.66 L233.04,221.23 L232.30,221.76 L231.53,222.25 L230.73,222.71 L229.90,223.12 L229.05,223.50 L228.18,223.84 L227.30,224.14 L226.40,224.40 L225.50,224.61 L224.58,224.79 L223.66,224.93 L222.73,225.03 L221.79,225.10 L220.84,225.13 L219.88,225.13 L218.92,225.11 L217.96,225.06 L216.99,224.98 L216.04,224.88 L215.08,224.75 L214.12,224.60 L213.16,224.43 L212.19,224.24 L211.22,224.05 L210.24,223.84 L209.25,223.64 L208.26,223.44 L207.27,223.25 L206.27,223.07 L205.28,222.90 L204.28,222.73 L203.29,222.57 L202.30,222.42Z"/><circle cx="202.10" cy="223.60" r="1.20"/><path d="M424.20,245.97 L424.15,246.98 L424.10,247.98 L424.06,248.98 L424.01,249.99 L423.96,250.99 L423.90,251.99 L423.85,252.99 L423.79,253.99 L423.73,254.99 L423.66,255.99 L423.58,256.98 L423.50,257.98 L423.41,258.97 L423.32,259.96 L423.22,260.96 L423.11,261.95 L422.99,262.94 L422.87,263.93 L422.75,264.92 L422.61,265.91 L422.48,266.90 L422.34,267.89 L422.19,268.88 L422.04,269.86 L421.88,270.85 L421.72,271.84 L421.55,272.82 L421.38,273.81 L421.21,274.79 L421.03,275.77 L420.84,276.76 L420.66,277.74 L420.46,278.72 L420.27,279.70 L420.07,280.68 L419.87,281.67 L419.67,282.65 L419.47,283.63 L419.26,284.61 L419.05,285.59 L418.85,286.57 L418.64,287.56 L418.42,288.54 L418.21,289.52 L418.00,290.50 L417.79,291.48 L417.58,292.47 L417.38,293.46 L417.19,294.45 L417.00,295.45 L416.82,296.44 L416.64,297.44 L416.46,298.43 L416.29,299.42 L416.12,300.41 L415.94,301.40 L415.77,302.38 L415.58,303.35 L415.39,304.32 L415.18,305.28 L414.97,306.23 L414.74,307.18 L414.49,308.13 L414.23,309.08 L413.96,310.02 L413.67,310.96 L413.37,311.90 L413.07,312.84 L412.75,313.78 L412.42,314.72 L412.09,315.66 L411.75,316.59 L411.41,317.53 L411.06,318.46 L410.71,319.40 L410.36,320.33 L410.00,321.26 L409.63,322.18 L409.26,323.11 L408.88,324.03 L408.51,324.95 L408.12,325.87 L407.73,326.79 L407.34,327.71 L406.94,328.62 L406.54,329.53 L406.13,330.44 L405.72,331.34 L405.30,332.24 L404.87,333.14 L404.44,334.03 L404.00,334.92 L403.56,335.81 L403.11,336.69 L402.65,337.57 L402.18,338.45 L401.71,339.32 L401.23,340.19 L400.75,341.06 L400.26,341.93 L399.76,342.79 L399.26,343.65 L398.76,344.51 L398.25,345.36 L397.73,346.22 L397.21,347.07 L396.69,347.92 L396.16,348.76 L395.63,349.60 L395.09,350.45 L394.55,351.29 L394.01,352.12 L393.46,352.96 L392.91,353.79 L392.35,354.62 L391.80,355.44 L391.23,356.26 L390.67,357.08 L390.10,357.90 L389.52,358.70 L388.94,359.51 L388.35,360.31 L387.76,361.10 L387.16,361.89 L386.55,362.67 L385.96,363.47 L385.37,364.27 L384.77,365.07 L384.17,365.87 L383.56,366.66 L382.95,367.45 L382.33,368.24 L381.72,369.03 L381.10,369.82 L380.47,370.60 L379.85,371.39 L379.22,372.17 L378.60,372.95 L377.97,373.74 L377.34,374.51 L376.70,375.29 L376.07,376.06 L375.43,376.83 L374.78,377.60 L374.14,378.36 L373.49,379.13 L372.83,379.89 L372.18,380.65 L371.52,381.41 L370.86,382.17 L370.20,382.92 L369.54,383.68 L368.88,384.44 L368.22,385.20 L367.55,385.95 L366.89,386.71 L366.56,387.09 L367.44,387.91 L367.79,387.56 L368.51,386.85 L369.22,386.14 L369.93,385.43 L370.65,384.72 L371.36,384.01 L372.07,383.30 L372.79,382.59 L373.50,381.87 L374.21,381.16 L374.92,380.44 L375.62,379.72 L376.33,378.99 L377.03,378.27 L377.73,377.54 L378.42,376.80 L379.11,376.07 L379.80,375.33 L380.49,374.59 L381.17,373.85 L381.86,373.10 L382.54,372.36 L383.22,371.62 L383.90,370.87 L384.57,370.12 L385.25,369.37 L385.92,368.61 L386.59,367.85 L387.26,367.09 L387.92,366.32 L388.58,365.55 L389.23,364.76 L389.85,363.96 L390.47,363.15 L391.08,362.33 L391.69,361.51 L392.28,360.69 L392.87,359.86 L393.46,359.03 L394.04,358.19 L394.61,357.35 L395.18,356.51 L395.74,355.67 L396.30,354.83 L396.85,353.98 L397.41,353.13 L397.95,352.28 L398.50,351.43 L399.04,350.57 L399.58,349.71 L400.11,348.85 L400.64,347.98 L401.16,347.11 L401.68,346.24 L402.20,345.37 L402.71,344.49 L403.21,343.61 L403.71,342.73 L404.21,341.84 L404.70,340.95 L405.18,340.05 L405.66,339.15 L406.13,338.25 L406.59,337.35 L407.05,336.44 L407.50,335.52 L407.94,334.61 L408.38,333.69 L408.80,332.77 L409.23,331.84 L409.64,330.92 L410.06,329.99 L410.46,329.06 L410.86,328.13 L411.26,327.19 L411.65,326.26 L412.03,325.32 L412.41,324.38 L412.79,323.44 L413.16,322.49 L413.53,321.55 L413.89,320.60 L414.25,319.66 L414.60,318.71 L414.95,317.75 L415.29,316.80 L415.63,315.84 L415.97,314.88 L416.29,313.91 L416.61,312.94 L416.92,311.97 L417.22,310.99 L417.50,310.00 L417.78,309.01 L418.03,308.01 L418.28,307.01 L418.50,306.01 L418.72,305.00 L418.92,304.00 L419.11,303.00 L419.29,302.00 L419.46,301.00 L419.64,300.01 L419.81,299.02 L419.98,298.04 L420.16,297.05 L420.34,296.07 L420.53,295.09 L420.72,294.11 L420.91,293.13 L421.09,292.14 L421.27,291.15 L421.45,290.16 L421.63,289.17 L421.81,288.18 L421.98,287.19 L422.16,286.20 L422.33,285.20 L422.51,284.21 L422.68,283.22 L422.85,282.22 L423.02,281.23 L423.18,280.23 L423.34,279.23 L423.50,278.24 L423.66,277.24 L423.81,276.24 L423.96,275.24 L424.10,274.24 L424.24,273.23 L424.37,272.23 L424.50,271.23 L424.63,270.23 L424.75,269.22 L424.87,268.21 L424.97,267.21 L425.08,266.20 L425.18,265.20 L425.27,264.19 L425.36,263.18 L425.44,262.17 L425.52,261.16 L425.59,260.15 L425.65,259.14 L425.71,258.13 L425.76,257.12 L425.80,256.10 L425.83,255.09 L425.86,254.08 L425.89,253.07 L425.91,252.07 L425.93,251.06 L425.94,250.05 L425.96,249.04 L425.97,248.04 L425.99,247.03 L426.00,246.03Z"/><circle cx="425.10" cy="246.00" r="0.90"/><path d="M259.05,114.11 L258.55,114.98 L258.04,115.84 L257.54,116.71 L257.03,117.58 L256.53,118.45 L256.03,119.32 L255.52,120.18 L255.02,121.05 L254.51,121.92 L254.00,122.78 L253.49,123.65 L252.98,124.51 L252.47,125.37 L251.96,126.24 L251.45,127.10 L250.94,127.97 L250.43,128.84 L249.93,129.71 L249.43,130.59 L248.94,131.47 L248.45,132.35 L247.96,133.24 L247.49,134.13 L247.01,135.02 L246.55,135.91 L246.08,136.81 L245.63,137.72 L245.18,138.63 L244.74,139.54 L244.31,140.47 L243.89,141.40 L243.49,142.34 L243.11,143.29 L242.74,144.26 L242.39,145.24 L242.08,146.23 L241.80,147.25 L241.57,148.29 L241.39,149.35 L241.28,150.43 L241.24,151.51 L241.27,152.59 L241.37,153.66 L241.54,154.71 L241.75,155.75 L242.00,156.77 L242.27,157.77 L242.56,158.75 L242.86,159.73 L243.17,160.70 L243.48,161.66 L243.80,162.62 L244.13,163.58 L244.46,164.53 L244.80,165.49 L245.14,166.44 L245.49,167.39 L245.85,168.34 L246.21,169.29 L246.59,170.23 L246.97,171.18 L247.36,172.12 L247.76,173.05 L248.17,173.99 L248.60,174.91 L249.03,175.84 L249.48,176.76 L249.93,177.67 L250.39,178.57 L250.86,179.47 L251.34,180.37 L251.82,181.26 L252.30,182.15 L252.79,183.03 L253.28,183.91 L253.77,184.79 L254.27,185.67 L254.76,186.55 L255.26,187.42 L255.77,188.30 L256.27,189.17 L256.78,190.04 L257.30,190.91 L257.81,191.77 L258.33,192.64 L258.85,193.50 L259.37,194.36 L259.89,195.22 L260.41,196.08 L260.94,196.94 L261.47,197.80 L262.01,198.66 L262.55,199.51 L263.09,200.36 L263.63,201.21 L264.18,202.05 L264.72,202.90 L265.27,203.74 L265.82,204.58 L266.36,205.43 L266.91,206.27 L267.46,207.11 L268.00,207.95 L268.54,208.79 L269.08,209.63 L269.62,210.47 L270.16,211.32 L270.69,212.16 L271.22,213.00 L271.75,213.85 L272.27,214.70 L272.79,215.55 L273.30,216.41 L273.81,217.26 L274.32,218.12 L274.83,218.98 L275.33,219.84 L275.83,220.71 L276.32,221.57 L276.82,222.44 L277.31,223.31 L277.80,224.18 L278.28,225.06 L278.76,225.93 L279.24,226.81 L279.72,227.68 L280.19,228.56 L280.66,229.44 L281.13,230.33 L281.59,231.21 L282.05,232.10 L282.51,232.98 L282.96,233.87 L283.41,234.76 L283.85,235.65 L284.29,236.54 L284.72,237.43 L285.14,238.33 L285.55,239.23 L285.95,240.13 L286.34,241.03 L286.71,241.94 L287.07,242.85 L287.42,243.77 L287.76,244.69 L288.09,245.62 L288.41,246.57 L288.73,247.51 L289.05,248.47 L289.38,249.42 L289.72,250.38 L290.07,251.34 L290.42,252.29 L290.79,253.24 L291.16,254.18 L291.53,255.12 L291.91,256.05 L292.28,256.98 L292.65,257.91 L293.02,258.84 L293.38,259.76 L293.73,260.69 L294.08,261.62 L294.42,262.55 L294.75,263.48 L295.07,264.42 L295.39,265.36 L295.70,266.31 L296.00,267.25 L296.31,268.20 L296.61,269.15 L296.90,270.11 L297.19,271.06 L297.47,272.01 L297.75,272.97 L298.03,273.92 L298.30,274.88 L298.56,275.84 L298.81,276.80 L299.06,277.76 L299.33,278.71 L299.59,279.67 L299.84,280.63 L300.09,281.59 L300.33,282.55 L300.55,283.51 L300.77,284.48 L300.97,285.44 L301.16,286.41 L301.33,287.37 L301.48,288.34 L301.61,289.31 L301.73,290.29 L301.82,291.26 L301.89,292.24 L301.94,293.22 L301.97,294.20 L301.98,295.19 L301.97,296.17 L301.95,297.17 L301.92,298.16 L301.87,299.15 L301.82,300.15 L301.76,301.15 L301.69,302.14 L301.62,303.14 L301.54,304.14 L301.47,305.14 L301.39,306.14 L301.32,307.15 L301.24,308.15 L301.20,308.65 L302.20,308.75 L302.27,308.26 L302.40,307.26 L302.54,306.27 L302.68,305.27 L302.82,304.28 L302.96,303.28 L303.09,302.29 L303.22,301.29 L303.35,300.29 L303.46,299.28 L303.57,298.28 L303.67,297.27 L303.76,296.26 L303.83,295.24 L303.88,294.22 L303.92,293.20 L303.93,292.18 L303.92,291.15 L303.89,290.13 L303.83,289.10 L303.76,288.08 L303.66,287.06 L303.55,286.04 L303.42,285.03 L303.27,284.02 L303.11,283.01 L302.94,282.01 L302.76,281.01 L302.57,280.01 L302.38,279.02 L302.17,278.02 L301.96,277.03 L301.71,276.04 L301.45,275.06 L301.19,274.08 L300.91,273.11 L300.64,272.13 L300.35,271.16 L300.06,270.19 L299.77,269.23 L299.47,268.26 L299.17,267.30 L298.86,266.34 L298.55,265.37 L298.23,264.41 L297.91,263.45 L297.58,262.49 L297.24,261.54 L296.90,260.58 L296.54,259.63 L296.18,258.68 L295.81,257.74 L295.44,256.80 L295.06,255.86 L294.69,254.93 L294.32,254.00 L293.95,253.08 L293.58,252.15 L293.23,251.23 L292.88,250.30 L292.55,249.37 L292.22,248.44 L291.89,247.50 L291.57,246.55 L291.25,245.60 L290.92,244.64 L290.58,243.68 L290.23,242.72 L289.87,241.77 L289.50,240.81 L289.11,239.87 L288.70,238.92 L288.29,237.99 L287.86,237.07 L287.43,236.15 L286.99,235.23 L286.54,234.32 L286.09,233.41 L285.64,232.51 L285.18,231.61 L284.72,230.71 L284.25,229.82 L283.78,228.93 L283.31,228.04 L282.83,227.15 L282.36,226.26 L281.88,225.37 L281.39,224.49 L280.91,223.60 L280.42,222.72 L279.92,221.84 L279.43,220.96 L278.93,220.09 L278.43,219.21 L277.92,218.34 L277.42,217.47 L276.91,216.60 L276.39,215.73 L275.87,214.86 L275.35,214.00 L274.83,213.14 L274.30,212.28 L273.77,211.42 L273.23,210.56 L272.69,209.71 L272.15,208.86 L271.61,208.01 L271.06,207.16 L270.52,206.32 L269.97,205.48 L269.43,204.63 L268.88,203.79 L268.33,202.95 L267.79,202.11 L267.24,201.27 L266.70,200.43 L266.15,199.59 L265.62,198.75 L265.08,197.90 L264.55,197.06 L264.02,196.21 L263.49,195.37 L262.97,194.52 L262.45,193.66 L261.93,192.81 L261.42,191.95 L260.90,191.09 L260.39,190.24 L259.88,189.38 L259.37,188.52 L258.86,187.66 L258.36,186.79 L257.87,185.93 L257.37,185.06 L256.88,184.19 L256.39,183.32 L255.90,182.45 L255.42,181.58 L254.93,180.70 L254.46,179.83 L253.98,178.95 L253.52,178.08 L253.06,177.20 L252.61,176.32 L252.17,175.43 L251.74,174.55 L251.32,173.65 L250.91,172.76 L250.51,171.86 L250.12,170.95 L249.74,170.04 L249.37,169.12 L249.01,168.20 L248.65,167.27 L248.30,166.35 L247.96,165.41 L247.62,164.48 L247.29,163.54 L246.97,162.60 L246.65,161.66 L246.33,160.72 L246.02,159.77 L245.72,158.83 L245.43,157.89 L245.16,156.95 L244.90,156.02 L244.68,155.09 L244.49,154.18 L244.34,153.26 L244.24,152.36 L244.17,151.46 L244.16,150.56 L244.20,149.66 L244.31,148.75 L244.46,147.84 L244.66,146.93 L244.90,146.01 L245.17,145.08 L245.47,144.16 L245.79,143.23 L246.13,142.31 L246.48,141.39 L246.85,140.48 L247.23,139.56 L247.63,138.65 L248.03,137.74 L248.44,136.83 L248.85,135.93 L249.27,135.02 L249.70,134.12 L250.13,133.22 L250.57,132.32 L251.01,131.43 L251.46,130.54 L251.91,129.65 L252.37,128.76 L252.83,127.87 L253.30,126.98 L253.76,126.09 L254.23,125.20 L254.69,124.31 L255.16,123.42 L255.62,122.53 L256.08,121.64 L256.54,120.74 L257.00,119.85 L257.46,118.96 L257.92,118.06 L258.38,117.17 L258.83,116.28 L259.29,115.38 L259.75,114.49Z"/><path d="M240.39,183.05 L241.28,183.59 L242.18,184.13 L243.08,184.68 L243.97,185.22 L244.87,185.76 L245.77,186.29 L246.70,186.75 L247.64,187.20 L248.58,187.66 L249.51,188.11 L250.44,188.58 L251.37,189.04 L252.28,189.51 L253.19,189.99 L254.09,190.48 L254.97,190.98 L255.86,191.49 L256.73,192.01 L257.61,192.56 L258.05,192.83 L259.15,191.17 L258.72,190.87 L257.86,190.27 L256.98,189.68 L256.08,189.10 L255.16,188.56 L254.23,188.05 L253.30,187.56 L252.36,187.08 L251.42,186.61 L250.48,186.14 L249.54,185.68 L248.60,185.22 L247.66,184.77 L246.72,184.31 L245.74,183.94 L244.76,183.58 L243.77,183.22 L242.79,182.86 L241.80,182.50 L240.81,182.15Z"/><circle cx="258.60" cy="192.00" r="1.00"/><path d="M244.73,196.73 L245.36,197.53 L245.99,198.33 L246.62,199.12 L247.26,199.92 L247.89,200.72 L248.52,201.51 L249.15,202.31 L249.79,203.11 L250.42,203.90 L251.06,204.70 L251.71,205.48 L252.39,206.24 L253.07,207.00 L253.76,207.75 L254.45,208.50 L255.14,209.25 L255.83,209.99 L256.52,210.74 L257.21,211.48 L257.89,212.23 L258.57,212.98 L259.24,213.73 L259.90,214.48 L260.55,215.25 L261.20,216.01 L261.83,216.79 L262.45,217.58 L263.07,218.37 L263.68,219.17 L264.29,219.97 L264.90,220.78 L265.50,221.60 L266.10,222.41 L266.71,223.23 L267.31,224.05 L267.62,224.46 L269.38,223.14 L269.08,222.74 L268.48,221.92 L267.87,221.10 L267.27,220.29 L266.66,219.47 L266.05,218.65 L265.44,217.84 L264.81,217.02 L264.18,216.21 L263.54,215.41 L262.89,214.61 L262.23,213.82 L261.56,213.04 L260.88,212.27 L260.20,211.51 L259.52,210.75 L258.83,210.00 L258.14,209.25 L257.45,208.50 L256.76,207.75 L256.07,207.01 L255.38,206.26 L254.70,205.52 L254.02,204.77 L253.35,204.01 L252.64,203.28 L251.92,202.56 L251.21,201.84 L250.49,201.12 L249.77,200.40 L249.06,199.68 L248.34,198.96 L247.62,198.23 L246.91,197.51 L246.19,196.79 L245.47,196.07Z"/><circle cx="268.50" cy="223.80" r="1.10"/><path d="M268.25,222.73 L267.23,222.97 L266.21,223.21 L265.20,223.45 L264.20,223.67 L263.20,223.86 L262.22,224.02 L261.24,224.12 L260.27,224.16 L259.29,224.14 L258.31,224.06 L257.32,223.93 L256.34,223.76 L255.37,223.59 L254.39,223.42 L253.43,223.19 L252.47,222.89 L251.51,222.54 L250.53,222.16 L250.07,223.04 L250.95,223.63 L251.86,224.20 L252.81,224.74 L253.81,225.22 L254.85,225.63 L255.91,225.92 L256.99,226.11 L258.08,226.25 L259.18,226.34 L260.29,226.36 L261.40,226.32 L262.50,226.20 L263.58,226.03 L264.64,225.82 L265.69,225.59 L266.71,225.35 L267.74,225.11 L268.75,224.87Z"/><circle cx="268.50" cy="223.80" r="1.10"/><path d="M253.21,201.10 L252.96,202.11 L252.70,203.11 L252.45,204.11 L252.21,205.13 L251.98,206.14 L251.76,207.17 L251.57,208.21 L251.40,209.25 L251.26,210.29 L251.17,211.34 L251.12,212.39 L251.10,213.44 L251.10,214.50 L251.13,215.57 L251.21,216.64 L251.33,217.71 L251.50,218.77 L251.73,219.82 L252.01,220.86 L252.32,221.88 L252.66,222.88 L253.03,223.85 L253.45,224.81 L253.87,225.76 L254.30,226.71 L254.74,227.66 L255.19,228.59 L255.65,229.53 L256.11,230.45 L256.58,231.38 L257.04,232.30 L257.96,231.90 L257.59,230.93 L257.22,229.97 L256.86,229.00 L256.51,228.04 L256.16,227.07 L255.83,226.10 L255.51,225.13 L255.19,224.15 L254.88,223.18 L254.55,222.21 L254.23,221.26 L253.93,220.31 L253.68,219.35 L253.47,218.40 L253.31,217.43 L253.20,216.45 L253.13,215.47 L253.10,214.47 L253.10,213.47 L253.12,212.46 L253.17,211.45 L253.22,210.44 L253.25,209.43 L253.31,208.42 L253.39,207.41 L253.49,206.39 L253.62,205.38 L253.75,204.36 L253.90,203.34 L254.04,202.32 L254.19,201.30Z"/><path d="M209.79,256.66 L209.02,257.32 L208.24,257.98 L207.48,258.65 L206.71,259.34 L205.97,260.07 L205.24,260.83 L204.56,261.64 L203.92,262.48 L203.32,263.36 L202.76,264.27 L202.25,265.22 L201.81,266.22 L201.50,267.28 L201.27,268.36 L201.13,269.46 L201.09,270.57 L201.16,271.69 L201.33,272.80 L201.62,273.89 L202.02,274.94 L202.51,275.92 L203.03,276.84 L203.56,277.71 L204.08,278.57 L204.58,279.43 L205.09,280.30 L205.58,281.16 L206.05,282.01 L206.46,282.85 L206.81,283.68 L207.07,284.51 L207.23,285.34 L207.29,286.20 L207.27,287.08 L207.16,287.98 L207.00,288.91 L206.79,289.84 L206.54,290.77 L206.26,291.68 L205.94,292.58 L205.59,293.46 L205.19,294.35 L204.76,295.25 L204.32,296.19 L203.90,297.20 L203.57,298.28 L203.39,299.45 L203.42,300.65 L203.70,301.84 L204.21,302.92 L204.89,303.89 L205.68,304.72 L206.54,305.45 L207.44,306.08 L208.39,306.64 L209.35,307.12 L210.33,307.55 L211.32,307.92 L212.32,308.26 L213.31,308.57 L214.31,308.85 L215.31,309.11 L216.32,309.34 L217.33,309.56 L218.34,309.76 L219.36,309.94 L220.38,310.10 L221.40,310.24 L222.43,310.36 L223.45,310.46 L224.48,310.55 L225.50,310.62 L226.53,310.67 L227.56,310.71 L228.59,310.73 L229.63,310.73 L230.66,310.70 L231.68,310.66 L232.71,310.61 L233.72,310.54 L234.74,310.47 L235.74,310.40 L236.75,310.33 L237.75,310.27 L238.76,310.20 L239.76,310.14 L240.77,310.07 L241.77,310.01 L242.77,309.96 L243.77,309.89 L244.76,309.81 L245.75,309.74 L246.75,309.68 L247.75,309.63 L248.76,309.58 L249.76,309.54 L250.77,309.50 L251.78,309.46 L252.79,309.42 L253.29,309.40 L253.31,307.80 L252.80,307.77 L251.79,307.72 L250.78,307.67 L249.77,307.62 L248.76,307.57 L247.75,307.53 L246.73,307.49 L245.71,307.46 L244.69,307.44 L243.66,307.43 L242.64,307.46 L241.62,307.52 L240.61,307.58 L239.60,307.64 L238.60,307.71 L237.59,307.77 L236.58,307.84 L235.57,307.91 L234.56,307.98 L233.56,308.05 L232.56,308.11 L231.57,308.16 L230.58,308.20 L229.60,308.23 L228.61,308.23 L227.63,308.21 L226.64,308.18 L225.65,308.12 L224.67,308.06 L223.68,307.97 L222.70,307.87 L221.72,307.76 L220.74,307.63 L219.77,307.47 L218.80,307.30 L217.83,307.11 L216.87,306.91 L215.91,306.68 L214.96,306.43 L214.02,306.17 L213.08,305.88 L212.17,305.57 L211.28,305.23 L210.41,304.86 L209.58,304.44 L208.79,303.98 L208.06,303.47 L207.40,302.91 L206.83,302.30 L206.37,301.67 L206.06,301.01 L205.90,300.33 L205.88,299.61 L206.00,298.85 L206.25,298.04 L206.60,297.20 L207.02,296.32 L207.45,295.40 L207.89,294.45 L208.28,293.46 L208.64,292.46 L208.94,291.45 L209.22,290.44 L209.45,289.40 L209.64,288.34 L209.76,287.26 L209.79,286.14 L209.71,285.02 L209.49,283.90 L209.16,282.83 L208.74,281.81 L208.26,280.85 L207.76,279.94 L207.25,279.05 L206.74,278.17 L206.23,277.29 L205.70,276.42 L205.19,275.57 L204.72,274.74 L204.31,273.93 L204.00,273.12 L203.78,272.28 L203.64,271.42 L203.59,270.55 L203.62,269.66 L203.73,268.78 L203.92,267.90 L204.18,267.04 L204.46,266.17 L204.81,265.30 L205.21,264.45 L205.66,263.61 L206.15,262.79 L206.69,262.00 L207.27,261.23 L207.89,260.48 L208.55,259.74 L209.23,259.00 L209.92,258.27 L210.61,257.54Z"/><circle cx="253.30" cy="308.60" r="0.80"/><path d="M244.42,303.28 L244.66,304.27 L244.89,305.26 L245.12,306.25 L245.36,307.24 L245.59,308.23 L245.82,309.22 L246.06,310.21 L246.29,311.20 L246.53,312.19 L246.77,313.18 L247.01,314.17 L247.28,315.15 L247.56,316.13 L247.84,317.10 L248.13,318.08 L248.42,319.06 L248.72,320.04 L249.02,321.01 L249.33,321.99 L249.64,322.96 L249.95,323.92 L250.26,324.89 L250.56,325.85 L250.87,326.82 L251.16,327.78 L251.45,328.75 L251.74,329.71 L252.01,330.68 L252.27,331.65 L252.52,332.62 L252.76,333.59 L252.99,334.57 L253.21,335.55 L253.43,336.53 L253.63,337.52 L253.83,338.51 L254.02,339.50 L254.21,340.49 L254.39,341.48 L254.58,342.48 L254.75,343.47 L254.93,344.47 L255.10,345.47 L255.27,346.47 L255.46,347.47 L255.65,348.46 L255.83,349.46 L256.02,350.46 L256.20,351.46 L256.39,352.45 L256.57,353.45 L256.76,354.45 L256.94,355.45 L257.13,356.45 L257.31,357.45 L259.09,357.15 L258.94,356.15 L258.79,355.14 L258.64,354.14 L258.49,353.13 L258.34,352.13 L258.19,351.13 L258.04,350.12 L257.90,349.12 L257.75,348.11 L257.59,347.10 L257.44,346.10 L257.27,345.10 L257.10,344.09 L256.92,343.09 L256.74,342.09 L256.56,341.09 L256.37,340.08 L256.18,339.08 L255.99,338.08 L255.79,337.08 L255.58,336.07 L255.36,335.07 L255.14,334.07 L254.90,333.07 L254.65,332.08 L254.40,331.08 L254.13,330.09 L253.85,329.11 L253.56,328.12 L253.27,327.14 L252.97,326.16 L252.66,325.19 L252.35,324.22 L252.04,323.25 L251.73,322.29 L251.42,321.32 L251.12,320.36 L250.82,319.39 L250.53,318.43 L250.24,317.46 L249.95,316.49 L249.67,315.52 L249.40,314.55 L249.12,313.57 L248.82,312.60 L248.51,311.64 L248.20,310.67 L247.90,309.70 L247.59,308.73 L247.29,307.76 L246.99,306.79 L246.68,305.82 L246.38,304.85 L246.08,303.88 L245.78,302.92Z"/><circle cx="245.10" cy="303.10" r="0.70"/><circle cx="258.20" cy="357.30" r="0.90"/><path d="M252.70,359.17 L253.67,359.47 L254.66,359.76 L255.68,360.02 L256.71,360.23 L257.75,360.40 L258.80,360.51 L259.86,360.57 L260.91,360.58 L261.95,360.53 L262.98,360.45 L264.01,360.36 L265.04,360.25 L266.06,360.13 L267.08,359.99 L268.09,359.85 L269.11,359.70 L270.12,359.54 L271.14,359.36 L272.15,359.18 L273.16,358.98 L274.16,358.78 L275.17,358.57 L276.17,358.34 L277.17,358.11 L278.16,357.86 L279.16,357.61 L280.15,357.35 L281.14,357.08 L282.12,356.81 L283.11,356.52 L284.09,356.23 L285.07,355.93 L286.05,355.62 L287.02,355.30 L288.00,354.98 L288.96,354.65 L289.93,354.30 L290.89,353.95 L291.85,353.60 L292.79,353.20 L293.73,352.79 L294.67,352.38 L295.60,351.96 L296.53,351.54 L297.46,351.12 L298.38,350.70 L299.31,350.28 L300.23,349.85 L301.16,349.43 L302.08,349.00 L303.00,348.58 L303.93,348.16 L303.47,347.04 L302.52,347.39 L301.56,347.74 L300.60,348.08 L299.65,348.43 L298.69,348.77 L297.74,349.12 L296.78,349.46 L295.83,349.80 L294.87,350.14 L293.92,350.47 L292.96,350.80 L292.00,351.12 L291.04,351.44 L290.10,351.79 L289.15,352.14 L288.21,352.47 L287.26,352.80 L286.30,353.12 L285.35,353.43 L284.39,353.73 L283.43,354.03 L282.46,354.32 L281.49,354.59 L280.53,354.87 L279.56,355.13 L278.58,355.39 L277.61,355.63 L276.63,355.87 L275.65,356.10 L274.67,356.32 L273.69,356.53 L272.71,356.73 L271.72,356.92 L270.74,357.10 L269.75,357.27 L268.76,357.43 L267.76,357.58 L266.77,357.71 L265.77,357.84 L264.78,357.96 L263.79,358.07 L262.79,358.16 L261.81,358.23 L260.82,358.29 L259.85,358.34 L258.89,358.37 L257.93,358.36 L256.98,358.29 L256.02,358.18 L255.06,358.03 L254.09,357.84 L253.10,357.63Z"/><circle cx="252.90" cy="358.40" r="0.80"/><path d="M290.61,196.11 L290.86,197.08 L291.11,198.05 L291.36,199.03 L291.60,200.00 L291.85,200.97 L292.10,201.95 L292.34,202.92 L292.59,203.89 L292.84,204.86 L293.08,205.84 L293.33,206.81 L293.57,207.78 L293.81,208.76 L294.05,209.73 L294.29,210.70 L294.53,211.68 L294.77,212.65 L295.01,213.63 L295.24,214.60 L295.47,215.58 L295.70,216.55 L295.93,217.53 L296.15,218.50 L296.38,219.48 L296.60,220.46 L296.82,221.44 L297.04,222.41 L297.26,223.39 L297.47,224.37 L297.69,225.35 L297.90,226.33 L298.11,227.31 L298.32,228.29 L298.54,229.26 L298.77,230.24 L299.00,231.21 L299.23,232.19 L299.46,233.16 L299.69,234.14 L299.91,235.11 L300.13,236.08 L300.33,237.05 L300.53,238.02 L300.71,238.99 L300.88,239.96 L301.04,240.94 L301.18,241.91 L301.32,242.89 L301.44,243.87 L301.55,244.86 L301.66,245.85 L301.75,246.84 L301.84,247.83 L301.93,248.82 L302.01,249.81 L302.08,250.81 L302.16,251.81 L302.22,252.80 L302.29,253.80 L302.35,254.80 L302.41,255.80 L302.47,256.80 L302.53,257.80 L302.59,258.80 L302.64,259.80 L302.69,260.79 L302.73,261.79 L302.78,262.79 L302.81,263.79 L302.85,264.78 L302.88,265.78 L302.90,266.78 L302.92,267.77 L302.93,268.77 L302.94,269.77 L302.94,270.77 L302.94,271.76 L302.93,272.76 L302.92,273.76 L302.91,274.76 L302.89,275.76 L302.87,276.76 L302.85,277.75 L302.81,278.75 L302.78,279.74 L302.73,280.73 L302.68,281.72 L302.61,282.71 L302.54,283.70 L302.45,284.68 L302.35,285.66 L302.23,286.64 L302.10,287.61 L301.96,288.58 L301.80,289.56 L301.63,290.53 L301.44,291.50 L301.24,292.47 L301.04,293.44 L300.82,294.41 L300.59,295.37 L300.36,296.34 L300.13,297.31 L299.89,298.28 L299.64,299.25 L299.40,300.22 L299.15,301.19 L298.90,302.16 L298.64,303.12 L298.38,304.08 L298.11,305.05 L297.85,306.01 L297.57,306.97 L297.30,307.93 L297.02,308.89 L296.74,309.85 L296.45,310.81 L296.16,311.76 L295.87,312.71 L295.57,313.65 L295.26,314.59 L294.94,315.53 L294.61,316.47 L294.28,317.43 L293.96,318.40 L293.66,319.39 L293.38,320.39 L293.14,321.40 L292.94,322.41 L292.75,323.42 L292.58,324.43 L292.43,325.43 L292.28,326.43 L292.14,327.43 L292.00,328.43 L291.87,329.42 L291.72,330.41 L291.58,331.40 L291.43,332.38 L291.28,333.36 L291.12,334.35 L290.95,335.33 L290.77,336.31 L290.59,337.29 L290.41,338.27 L290.22,339.25 L290.02,340.23 L289.83,341.21 L289.63,342.19 L289.43,343.18 L289.23,344.16 L289.04,345.15 L288.84,346.14 L288.65,347.13 L288.47,348.12 L288.29,349.11 L288.11,350.10 L287.93,351.10 L287.76,352.09 L287.59,353.08 L287.43,354.07 L287.26,355.07 L287.10,356.06 L286.94,357.06 L286.79,358.05 L286.63,359.05 L286.49,360.05 L286.34,361.04 L286.20,362.05 L286.07,363.05 L285.94,364.05 L285.83,365.06 L285.71,366.07 L285.61,367.08 L285.52,368.09 L285.44,369.10 L285.36,370.11 L285.30,371.13 L285.26,372.15 L285.22,373.16 L285.19,374.18 L285.18,375.20 L285.17,376.21 L285.18,377.23 L285.20,378.25 L285.24,379.27 L285.29,380.29 L285.36,381.31 L285.45,382.33 L285.55,383.35 L285.67,384.37 L285.80,385.38 L285.94,386.38 L286.10,387.39 L286.27,388.39 L286.45,389.40 L286.64,390.40 L286.85,391.40 L287.08,392.40 L287.32,393.40 L287.59,394.39 L287.88,395.38 L288.20,396.36 L288.54,397.34 L288.91,398.31 L289.30,399.26 L289.72,400.21 L290.16,401.14 L290.62,402.06 L291.11,402.97 L291.62,403.87 L292.16,404.76 L292.73,405.63 L293.32,406.47 L293.94,407.31 L294.58,408.12 L295.25,408.91 L295.92,409.68 L296.61,410.43 L297.30,411.17 L298.00,411.91 L298.70,412.63 L299.40,413.35 L301.00,411.85 L300.32,411.11 L299.65,410.37 L298.98,409.63 L298.33,408.89 L297.68,408.14 L297.06,407.39 L296.45,406.63 L295.87,405.86 L295.32,405.07 L294.79,404.26 L294.28,403.44 L293.78,402.61 L293.30,401.77 L292.84,400.91 L292.41,400.05 L291.99,399.17 L291.60,398.28 L291.23,397.39 L290.89,396.48 L290.57,395.57 L290.27,394.64 L290.00,393.71 L289.74,392.77 L289.51,391.82 L289.29,390.87 L289.09,389.91 L288.90,388.94 L288.73,387.97 L288.57,386.99 L288.41,386.02 L288.27,385.04 L288.15,384.06 L288.03,383.08 L287.94,382.10 L287.85,381.13 L287.79,380.15 L287.74,379.16 L287.70,378.18 L287.68,377.19 L287.67,376.21 L287.68,375.22 L287.69,374.23 L287.72,373.24 L287.75,372.25 L287.80,371.26 L287.86,370.28 L287.93,369.29 L288.01,368.30 L288.10,367.32 L288.20,366.33 L288.31,365.34 L288.43,364.36 L288.55,363.37 L288.68,362.38 L288.82,361.39 L288.96,360.41 L289.11,359.42 L289.26,358.43 L289.41,357.45 L289.57,356.46 L289.73,355.47 L289.89,354.48 L290.06,353.50 L290.22,352.51 L290.40,351.53 L290.57,350.54 L290.75,349.56 L290.93,348.58 L291.11,347.60 L291.30,346.61 L291.49,345.63 L291.69,344.65 L291.88,343.67 L292.08,342.69 L292.28,341.70 L292.47,340.72 L292.67,339.73 L292.86,338.74 L293.05,337.75 L293.23,336.75 L293.41,335.76 L293.58,334.76 L293.74,333.76 L293.90,332.76 L294.05,331.76 L294.20,330.76 L294.34,329.77 L294.48,328.77 L294.62,327.78 L294.76,326.79 L294.90,325.80 L295.05,324.82 L295.21,323.85 L295.39,322.89 L295.59,321.94 L295.81,321.01 L296.06,320.08 L296.34,319.16 L296.65,318.23 L296.97,317.29 L297.30,316.35 L297.63,315.39 L297.95,314.42 L298.25,313.46 L298.55,312.49 L298.85,311.52 L299.13,310.56 L299.42,309.59 L299.70,308.62 L299.98,307.65 L300.25,306.69 L300.52,305.71 L300.79,304.74 L301.05,303.77 L301.31,302.79 L301.57,301.82 L301.82,300.84 L302.07,299.86 L302.31,298.89 L302.56,297.91 L302.79,296.93 L303.03,295.95 L303.26,294.96 L303.48,293.97 L303.69,292.98 L303.89,291.98 L304.08,290.98 L304.26,289.98 L304.43,288.97 L304.58,287.96 L304.71,286.95 L304.83,285.93 L304.94,284.92 L305.03,283.90 L305.11,282.89 L305.17,281.87 L305.23,280.86 L305.27,279.85 L305.31,278.84 L305.35,277.82 L305.37,276.81 L305.39,275.81 L305.41,274.80 L305.42,273.79 L305.43,272.78 L305.44,271.77 L305.44,270.76 L305.44,269.76 L305.43,268.75 L305.42,267.74 L305.40,266.73 L305.38,265.72 L305.35,264.71 L305.31,263.70 L305.27,262.69 L305.23,261.68 L305.18,260.67 L305.13,259.67 L305.08,258.66 L305.03,257.66 L304.97,256.65 L304.91,255.65 L304.85,254.65 L304.79,253.64 L304.72,252.64 L304.65,251.63 L304.58,250.63 L304.50,249.62 L304.42,248.61 L304.33,247.61 L304.24,246.60 L304.14,245.59 L304.04,244.58 L303.92,243.58 L303.80,242.57 L303.66,241.56 L303.51,240.55 L303.35,239.55 L303.17,238.54 L302.98,237.54 L302.78,236.54 L302.57,235.55 L302.35,234.56 L302.13,233.58 L301.90,232.60 L301.67,231.62 L301.44,230.64 L301.20,229.66 L300.97,228.68 L300.73,227.71 L300.47,226.74 L300.21,225.77 L299.95,224.80 L299.68,223.82 L299.42,222.85 L299.15,221.89 L298.88,220.92 L298.61,219.95 L298.33,218.98 L298.06,218.01 L297.78,217.05 L297.51,216.08 L297.23,215.11 L296.95,214.15 L296.66,213.18 L296.38,212.22 L296.09,211.26 L295.80,210.29 L295.51,209.33 L295.22,208.37 L294.93,207.41 L294.64,206.45 L294.34,205.49 L294.05,204.53 L293.75,203.57 L293.46,202.61 L293.16,201.65 L292.87,200.69 L292.57,199.73 L292.27,198.77 L291.98,197.81 L291.68,196.85 L291.39,195.89Z"/><circle cx="300.20" cy="412.60" r="1.10"/><path d="M307.20,271.25 L307.08,272.26 L306.95,273.27 L306.83,274.28 L306.70,275.29 L306.58,276.30 L306.45,277.31 L306.32,278.32 L306.18,279.33 L306.04,280.33 L305.89,281.34 L305.74,282.34 L305.60,283.34 L305.45,284.34 L305.29,285.34 L305.12,286.34 L304.94,287.33 L304.75,288.33 L304.55,289.32 L304.35,290.31 L304.13,291.30 L303.91,292.29 L303.69,293.29 L303.46,294.28 L303.23,295.26 L302.99,296.25 L302.78,297.25 L302.56,298.24 L302.35,299.24 L302.13,300.23 L301.92,301.23 L301.70,302.23 L301.48,303.22 L301.26,304.22 L301.04,305.21 L300.83,306.21 L300.61,307.20 L301.39,307.40 L301.66,306.41 L301.93,305.43 L302.20,304.45 L302.47,303.47 L302.74,302.48 L303.02,301.50 L303.29,300.52 L303.56,299.54 L303.83,298.55 L304.09,297.57 L304.35,296.58 L304.59,295.59 L304.82,294.59 L305.05,293.60 L305.28,292.60 L305.50,291.60 L305.72,290.60 L305.93,289.60 L306.13,288.60 L306.32,287.59 L306.50,286.58 L306.67,285.57 L306.83,284.56 L306.99,283.54 L307.13,282.53 L307.25,281.51 L307.36,280.50 L307.47,279.48 L307.57,278.46 L307.66,277.45 L307.75,276.43 L307.84,275.41 L307.93,274.40 L308.02,273.38 L308.11,272.37 L308.20,271.35Z"/><path d="M301.43,229.26 L301.97,228.41 L302.52,227.57 L303.07,226.73 L303.62,225.89 L304.18,225.07 L304.75,224.25 L305.33,223.44 L305.91,222.64 L306.52,221.85 L307.13,221.08 L307.76,220.33 L308.41,219.59 L309.08,218.87 L309.76,218.17 L310.46,217.48 L311.18,216.81 L311.91,216.14 L312.65,215.48 L313.39,214.82 L314.12,214.16 L314.87,213.50 L315.61,212.85 L316.37,212.22 L317.14,211.60 L317.91,211.00 L318.70,210.42 L319.49,209.87 L320.30,209.33 L321.12,208.83 L321.95,208.36 L322.78,207.93 L323.63,207.56 L324.47,207.26 L325.32,207.03 L326.16,206.88 L327.00,206.83 L327.82,206.88 L328.63,207.02 L329.41,207.26 L330.16,207.59 L330.86,208.02 L331.52,208.53 L332.12,209.11 L332.67,209.77 L333.16,210.50 L333.60,211.28 L333.99,212.11 L334.34,212.97 L334.64,213.86 L334.91,214.78 L335.15,215.70 L335.35,216.65 L335.52,217.60 L335.66,218.56 L335.78,219.52 L335.87,220.49 L335.94,221.46 L335.99,222.44 L336.01,223.42 L336.02,224.40 L336.00,225.38 L335.97,226.37 L335.92,227.35 L335.85,228.33 L335.76,229.30 L335.65,230.28 L335.52,231.25 L335.38,232.23 L335.22,233.20 L335.04,234.16 L334.84,235.13 L334.62,236.09 L334.40,237.05 L334.15,238.01 L333.90,238.96 L333.62,239.91 L333.34,240.86 L333.04,241.80 L332.73,242.74 L332.40,243.67 L332.06,244.59 L331.70,245.50 L331.33,246.41 L330.93,247.30 L330.52,248.19 L330.08,249.05 L329.62,249.91 L329.14,250.75 L328.63,251.58 L328.10,252.40 L327.55,253.20 L326.98,253.99 L326.39,254.77 L325.78,255.54 L325.16,256.31 L324.52,257.07 L323.87,257.82 L323.22,258.57 L322.56,259.32 L321.89,260.06 L321.22,260.80 L320.54,261.54 L319.86,262.26 L319.18,262.98 L318.49,263.69 L317.79,264.38 L317.08,265.05 L316.36,265.70 L315.63,266.31 L314.88,266.89 L314.12,267.42 L313.35,267.91 L312.57,268.36 L311.75,268.74 L310.91,269.06 L310.03,269.32 L309.13,269.50 L308.20,269.64 L307.25,269.71 L306.30,269.73 L305.34,269.70 L304.37,269.63 L303.39,269.53 L302.40,269.41 L302.20,270.59 L303.19,270.80 L304.18,271.00 L305.20,271.16 L306.22,271.28 L307.26,271.35 L308.31,271.36 L309.35,271.31 L310.40,271.19 L311.44,270.99 L312.47,270.70 L313.48,270.33 L314.45,269.88 L315.37,269.35 L316.24,268.75 L317.07,268.10 L317.87,267.43 L318.64,266.74 L319.39,266.03 L320.12,265.31 L320.84,264.58 L321.54,263.84 L322.23,263.10 L322.92,262.35 L323.60,261.60 L324.27,260.85 L324.94,260.09 L325.61,259.33 L326.27,258.56 L326.93,257.77 L327.57,256.98 L328.21,256.18 L328.83,255.36 L329.43,254.52 L330.02,253.67 L330.58,252.81 L331.12,251.92 L331.64,251.03 L332.12,250.11 L332.59,249.19 L333.03,248.26 L333.44,247.31 L333.84,246.36 L334.21,245.41 L334.57,244.45 L334.91,243.48 L335.23,242.51 L335.54,241.54 L335.83,240.56 L336.11,239.58 L336.38,238.59 L336.63,237.60 L336.87,236.61 L337.09,235.61 L337.29,234.61 L337.48,233.60 L337.65,232.59 L337.80,231.57 L337.93,230.55 L338.05,229.53 L338.14,228.51 L338.21,227.49 L338.27,226.46 L338.30,225.44 L338.32,224.41 L338.31,223.38 L338.29,222.36 L338.24,221.33 L338.16,220.30 L338.07,219.27 L337.94,218.25 L337.79,217.22 L337.60,216.20 L337.39,215.18 L337.13,214.17 L336.84,213.17 L336.49,212.17 L336.10,211.19 L335.64,210.22 L335.12,209.29 L334.51,208.39 L333.81,207.56 L333.03,206.79 L332.16,206.12 L331.22,205.56 L330.22,205.11 L329.17,204.78 L328.09,204.59 L326.99,204.53 L325.90,204.60 L324.82,204.78 L323.78,205.06 L322.77,205.43 L321.80,205.85 L320.86,206.33 L319.95,206.85 L319.06,207.39 L318.20,207.96 L317.35,208.56 L316.52,209.17 L315.71,209.80 L314.91,210.44 L314.13,211.10 L313.35,211.77 L312.59,212.44 L311.84,213.13 L311.10,213.83 L310.39,214.56 L309.68,215.30 L308.99,216.05 L308.30,216.82 L307.64,217.60 L307.00,218.40 L306.37,219.22 L305.77,220.05 L305.19,220.89 L304.63,221.74 L304.09,222.60 L303.56,223.47 L303.04,224.34 L302.53,225.22 L302.03,226.10 L301.54,226.98 L301.05,227.86 L300.57,228.74Z"/><path d="M327.94,218.95 L327.18,219.64 L326.41,220.32 L325.65,221.01 L324.89,221.70 L324.13,222.38 L323.37,223.07 L322.61,223.76 L321.85,224.46 L321.14,225.20 L320.43,225.95 L319.74,226.71 L319.04,227.47 L318.36,228.24 L317.67,229.01 L317.00,229.79 L316.33,230.57 L315.67,231.34 L315.00,232.11 L314.33,232.87 L313.66,233.63 L312.98,234.37 L312.29,235.10 L311.59,235.81 L310.88,236.50 L310.15,237.18 L309.41,237.85 L308.65,238.50 L307.87,239.14 L307.11,239.80 L306.34,240.46 L305.57,241.11 L304.79,241.76 L304.00,242.41 L303.21,243.05 L302.41,243.69 L301.61,244.33 L300.81,244.96 L300.01,245.60 L299.21,246.24 L298.41,246.88 L298.01,247.19 L298.59,248.01 L299.02,247.73 L299.88,247.17 L300.74,246.61 L301.60,246.05 L302.46,245.50 L303.32,244.94 L304.17,244.37 L305.03,243.81 L305.89,243.23 L306.74,242.66 L307.59,242.07 L308.43,241.47 L309.26,240.85 L310.06,240.18 L310.85,239.50 L311.63,238.81 L312.40,238.10 L313.15,237.37 L313.88,236.62 L314.59,235.87 L315.29,235.10 L315.98,234.33 L316.66,233.55 L317.33,232.78 L318.00,232.00 L318.66,231.23 L319.33,230.46 L320.00,229.70 L320.68,228.94 L321.36,228.19 L322.05,227.45 L322.74,226.70 L323.43,225.96 L324.08,225.17 L324.73,224.38 L325.38,223.59 L326.04,222.80 L326.69,222.01 L327.35,221.22 L328.00,220.43 L328.66,219.65Z"/><path d="M310.88,238.59 L311.92,238.85 L312.97,239.12 L314.01,239.38 L315.07,239.61 L316.13,239.80 L317.20,239.97 L318.26,240.14 L319.34,240.29 L320.41,240.38 L321.49,240.42 L322.57,240.46 L323.64,240.50 L323.76,239.50 L322.70,239.30 L321.65,239.10 L320.60,238.89 L319.55,238.70 L318.50,238.55 L317.45,238.39 L316.40,238.22 L315.35,238.03 L314.30,237.87 L313.24,237.72 L312.18,237.57 L311.12,237.41Z"/><path d="M301.30,412.66 L301.38,411.66 L301.46,410.65 L301.54,409.65 L301.62,408.64 L301.71,407.64 L301.79,406.64 L301.88,405.64 L301.97,404.64 L302.06,403.65 L302.15,402.65 L302.24,401.66 L302.33,400.67 L302.44,399.68 L302.56,398.69 L302.69,397.71 L302.83,396.72 L302.98,395.74 L303.14,394.76 L303.31,393.78 L303.49,392.80 L303.68,391.83 L303.88,390.86 L304.10,389.90 L304.33,388.94 L304.58,387.98 L304.84,387.04 L305.12,386.10 L305.42,385.16 L305.74,384.23 L306.07,383.30 L306.42,382.37 L306.78,381.44 L307.14,380.51 L307.52,379.57 L307.89,378.63 L308.25,377.68 L308.61,376.72 L308.95,375.75 L309.28,374.78 L309.60,373.80 L309.90,372.83 L310.19,371.85 L310.47,370.88 L310.75,369.91 L311.03,368.95 L311.32,367.99 L311.61,367.05 L311.92,366.11 L312.25,365.19 L312.59,364.27 L312.95,363.37 L313.34,362.47 L313.74,361.58 L314.17,360.69 L314.61,359.81 L315.07,358.94 L315.54,358.07 L316.02,357.20 L316.52,356.34 L317.02,355.49 L317.53,354.64 L318.05,353.79 L318.55,352.93 L319.07,352.08 L319.59,351.24 L320.13,350.40 L320.67,349.57 L321.23,348.75 L321.80,347.94 L322.38,347.14 L322.97,346.35 L323.58,345.56 L324.20,344.79 L324.84,344.03 L325.49,343.28 L326.16,342.54 L326.83,341.80 L327.51,341.07 L328.20,340.34 L328.90,339.62 L329.60,338.90 L330.31,338.18 L331.02,337.47 L331.73,336.75 L332.44,336.04 L333.15,335.32 L333.86,334.61 L334.57,333.89 L334.03,333.31 L333.27,333.97 L332.51,334.64 L331.75,335.30 L330.99,335.97 L330.23,336.63 L329.48,337.30 L328.72,337.97 L327.96,338.65 L327.21,339.33 L326.47,340.01 L325.73,340.71 L324.99,341.41 L324.26,342.12 L323.55,342.85 L322.84,343.59 L322.14,344.34 L321.46,345.10 L320.79,345.88 L320.13,346.67 L319.49,347.46 L318.86,348.27 L318.24,349.09 L317.63,349.91 L317.03,350.74 L316.45,351.57 L315.87,352.42 L315.32,353.28 L314.79,354.15 L314.27,355.03 L313.76,355.92 L313.26,356.82 L312.77,357.72 L312.30,358.63 L311.83,359.55 L311.39,360.48 L310.96,361.42 L310.55,362.37 L310.16,363.33 L309.80,364.30 L309.46,365.28 L309.14,366.25 L308.83,367.23 L308.54,368.21 L308.26,369.18 L307.98,370.15 L307.70,371.12 L307.41,372.07 L307.12,373.02 L306.81,373.96 L306.50,374.89 L306.16,375.83 L305.82,376.76 L305.46,377.69 L305.10,378.62 L304.73,379.55 L304.35,380.50 L303.99,381.45 L303.63,382.41 L303.28,383.37 L302.95,384.35 L302.64,385.33 L302.34,386.32 L302.07,387.31 L301.81,388.31 L301.57,389.31 L301.34,390.31 L301.13,391.31 L300.94,392.32 L300.75,393.32 L300.57,394.33 L300.41,395.34 L300.26,396.35 L300.11,397.36 L299.98,398.37 L299.86,399.38 L299.75,400.40 L299.65,401.41 L299.56,402.43 L299.47,403.44 L299.41,404.46 L299.37,405.47 L299.32,406.48 L299.28,407.49 L299.24,408.50 L299.21,409.51 L299.17,410.52 L299.14,411.53 L299.10,412.54Z"/><circle cx="300.20" cy="412.60" r="1.10"/><path d="M328.13,340.03 L327.76,340.98 L327.39,341.92 L327.02,342.86 L326.65,343.80 L326.28,344.75 L325.90,345.69 L325.54,346.63 L325.17,347.58 L324.81,348.53 L324.45,349.48 L324.09,350.43 L323.74,351.39 L323.40,352.35 L323.06,353.32 L322.74,354.29 L322.42,355.26 L322.12,356.24 L321.82,357.23 L321.55,358.21 L321.29,359.21 L321.07,360.21 L320.86,361.22 L320.67,362.22 L320.48,363.22 L320.30,364.23 L320.13,365.23 L319.97,366.24 L319.81,367.24 L319.65,368.24 L319.49,369.25 L319.34,370.25 L319.18,371.24 L319.02,372.24 L318.86,373.23 L318.69,374.22 L318.52,375.21 L318.34,376.20 L318.15,377.19 L317.96,378.18 L317.77,379.17 L317.57,380.17 L317.38,381.16 L317.19,382.17 L317.01,383.17 L316.84,384.19 L316.69,385.21 L316.55,386.23 L316.44,387.26 L316.34,388.29 L316.27,389.33 L316.22,390.36 L316.20,391.40 L316.19,392.43 L316.20,393.46 L316.23,394.49 L316.28,395.52 L316.34,396.55 L316.42,397.58 L316.51,398.60 L316.61,399.62 L316.73,400.64 L316.85,401.66 L317.00,402.68 L317.15,403.69 L317.32,404.71 L317.50,405.72 L317.69,406.73 L317.89,407.73 L318.11,408.73 L318.33,409.73 L318.57,410.72 L318.80,411.71 L319.05,412.70 L319.29,413.69 L319.54,414.67 L319.81,415.65 L320.09,416.62 L320.36,417.60 L320.63,418.57 L322.77,418.03 L322.54,417.04 L322.32,416.05 L322.09,415.07 L321.87,414.08 L321.62,413.10 L321.38,412.12 L321.14,411.15 L320.90,410.17 L320.67,409.19 L320.45,408.21 L320.24,407.24 L320.04,406.26 L319.86,405.28 L319.68,404.30 L319.52,403.32 L319.37,402.33 L319.23,401.35 L319.11,400.36 L319.00,399.37 L318.90,398.37 L318.81,397.38 L318.74,396.39 L318.68,395.40 L318.63,394.41 L318.60,393.42 L318.59,392.43 L318.60,391.44 L318.62,390.45 L318.67,389.47 L318.74,388.48 L318.83,387.50 L318.94,386.52 L319.07,385.55 L319.21,384.56 L319.38,383.58 L319.55,382.60 L319.74,381.61 L319.93,380.62 L320.12,379.63 L320.32,378.64 L320.51,377.64 L320.70,376.64 L320.88,375.63 L321.06,374.63 L321.22,373.63 L321.39,372.62 L321.55,371.62 L321.71,370.62 L321.86,369.62 L322.02,368.62 L322.18,367.62 L322.34,366.62 L322.50,365.63 L322.67,364.64 L322.84,363.65 L323.03,362.67 L323.22,361.69 L323.42,360.71 L323.63,359.73 L323.83,358.76 L324.03,357.78 L324.25,356.81 L324.48,355.84 L324.72,354.87 L324.97,353.90 L325.23,352.93 L325.50,351.96 L325.78,350.99 L326.07,350.03 L326.36,349.06 L326.65,348.09 L326.95,347.13 L327.25,346.16 L327.55,345.20 L327.86,344.23 L328.16,343.27 L328.47,342.30 L328.77,341.33 L329.07,340.37Z"/><circle cx="321.70" cy="418.30" r="1.10"/><path d="M322.76,418.60 L323.06,417.64 L323.37,416.67 L323.67,415.70 L323.97,414.74 L324.28,413.77 L324.58,412.82 L324.89,411.86 L325.20,410.91 L325.50,409.95 L325.81,409.01 L326.13,408.06 L326.46,407.13 L326.81,406.20 L327.17,405.28 L327.55,404.36 L327.94,403.45 L328.34,402.54 L328.76,401.63 L329.18,400.73 L329.62,399.83 L330.07,398.94 L330.52,398.05 L330.99,397.18 L331.47,396.30 L331.96,395.44 L332.46,394.58 L332.98,393.73 L333.50,392.89 L334.04,392.05 L334.59,391.23 L335.15,390.41 L335.73,389.60 L336.31,388.79 L336.91,387.99 L337.51,387.20 L338.13,386.42 L338.75,385.63 L339.39,384.86 L340.02,384.09 L340.67,383.32 L341.32,382.55 L341.98,381.79 L342.64,381.04 L343.30,380.28 L343.97,379.53 L344.65,378.78 L345.32,378.04 L346.01,377.30 L346.69,376.56 L347.38,375.83 L348.07,375.10 L348.76,374.37 L349.44,373.62 L350.12,372.88 L350.80,372.14 L351.48,371.41 L352.17,370.68 L352.87,369.96 L353.58,369.25 L354.29,368.54 L355.01,367.84 L355.74,367.15 L356.47,366.46 L357.20,365.77 L357.95,365.09 L358.69,364.41 L359.44,363.73 L360.20,363.06 L360.95,362.38 L361.71,361.71 L362.47,361.04 L363.23,360.37 L363.98,359.70 L364.74,359.02 L365.12,358.69 L364.48,357.91 L364.08,358.22 L363.28,358.84 L362.47,359.46 L361.67,360.08 L360.87,360.69 L360.06,361.31 L359.26,361.93 L358.46,362.55 L357.66,363.18 L356.86,363.81 L356.06,364.44 L355.27,365.08 L354.48,365.73 L353.69,366.38 L352.91,367.04 L352.14,367.71 L351.37,368.38 L350.61,369.07 L349.85,369.75 L349.10,370.45 L348.36,371.15 L347.62,371.86 L346.89,372.57 L346.19,373.31 L345.49,374.05 L344.79,374.79 L344.10,375.54 L343.41,376.29 L342.72,377.04 L342.04,377.80 L341.36,378.56 L340.68,379.32 L340.01,380.09 L339.35,380.86 L338.68,381.64 L338.03,382.42 L337.38,383.21 L336.73,384.00 L336.09,384.80 L335.46,385.61 L334.83,386.43 L334.22,387.25 L333.61,388.08 L333.02,388.92 L332.44,389.77 L331.87,390.63 L331.31,391.50 L330.76,392.37 L330.23,393.25 L329.71,394.14 L329.20,395.04 L328.70,395.94 L328.22,396.85 L327.75,397.76 L327.29,398.68 L326.84,399.60 L326.40,400.53 L325.97,401.47 L325.56,402.41 L325.15,403.35 L324.76,404.31 L324.38,405.27 L324.02,406.24 L323.68,407.21 L323.34,408.18 L323.02,409.16 L322.72,410.14 L322.43,411.12 L322.16,412.10 L321.90,413.09 L321.65,414.07 L321.40,415.06 L321.15,416.04 L320.89,417.02 L320.64,418.00Z"/><circle cx="321.70" cy="418.30" r="1.10"/><path d="M362.30,360.14 L362.13,361.14 L361.95,362.14 L361.77,363.14 L361.59,364.14 L361.42,365.15 L361.25,366.16 L361.09,367.17 L360.94,368.19 L360.83,369.21 L360.78,370.25 L360.75,371.28 L360.73,372.32 L360.74,373.36 L360.78,374.40 L360.84,375.44 L360.92,376.48 L361.03,377.51 L361.16,378.54 L361.31,379.57 L361.48,380.60 L361.68,381.62 L361.91,382.64 L362.17,383.65 L362.45,384.66 L362.78,385.66 L363.13,386.65 L363.53,387.63 L363.96,388.60 L364.42,389.54 L364.92,390.47 L365.45,391.37 L366.00,392.26 L366.57,393.13 L367.15,393.98 L367.78,394.80 L368.43,395.60 L369.07,396.39 L369.73,397.18 L370.38,397.96 L371.03,398.74 L371.69,399.52 L372.34,400.30 L372.66,400.68 L373.94,399.72 L373.65,399.30 L373.07,398.46 L372.49,397.63 L371.91,396.79 L371.34,395.96 L370.77,395.13 L370.21,394.29 L369.66,393.45 L369.12,392.61 L368.56,391.80 L368.02,390.97 L367.50,390.14 L367.01,389.30 L366.56,388.44 L366.13,387.58 L365.74,386.70 L365.38,385.80 L365.05,384.89 L364.75,383.97 L364.48,383.03 L364.24,382.08 L364.03,381.13 L363.84,380.16 L363.68,379.19 L363.53,378.22 L363.41,377.24 L363.31,376.26 L363.23,375.28 L363.18,374.29 L363.14,373.31 L363.13,372.32 L363.15,371.34 L363.18,370.35 L363.23,369.36 L363.26,368.36 L363.27,367.36 L363.29,366.35 L363.32,365.34 L363.35,364.33 L363.39,363.31 L363.42,362.30 L363.46,361.28 L363.50,360.26Z"/><circle cx="373.30" cy="400.20" r="0.80"/></g></svg>

</body></html>
